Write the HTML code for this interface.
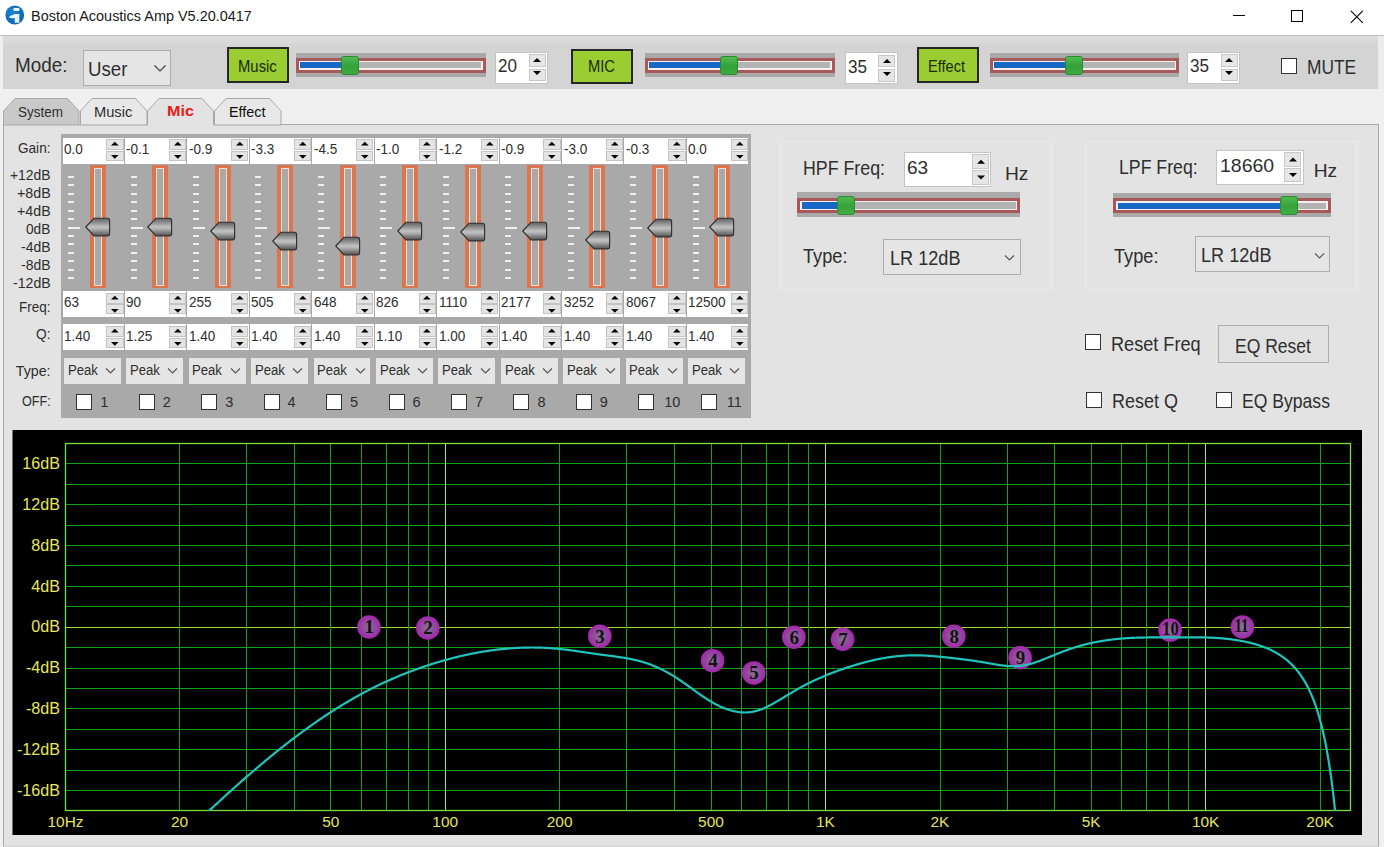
<!DOCTYPE html>
<html><head><meta charset="utf-8"><title>Boston Acoustics Amp</title>
<style>
html,body{margin:0;padding:0;width:1384px;height:847px;overflow:hidden;background:#f0f0f0;position:relative;font-family:"Liberation Sans",sans-serif}
body>div{position:absolute}
.t{position:absolute;white-space:nowrap;line-height:1}
</style></head><body>
<div style="left:0px;top:0px;width:1384px;height:35px;background:#fff"></div>
<svg style="position:absolute;left:4px;top:5px" width="21" height="21" viewBox="0 0 21 21">
<defs><radialGradient id="ig" cx="40%" cy="35%" r="70%"><stop offset="0" stop-color="#1f86d8"/><stop offset="1" stop-color="#0a5fae"/></radialGradient></defs>
<circle cx="10.75" cy="10" r="9.4" fill="url(#ig)"/>
<rect x="9.3" y="3.1" width="6.3" height="2.9" rx="1.4" fill="#e8f6ff"/>
<path d="M10.75 9 L15.3 9 L15.3 17.8 L10.75 17.8 L10.75 13.3 L5.6 12.9 L5.6 11.3 Z" fill="#e8f6ff"/>
</svg>
<div class="t" style="left:30.60px;top:7.80px;font-size:15.12px;color:#1a1a1a;transform:scaleX(0.9563);transform-origin:0 0;">Boston Acoustics Amp V5.20.0417</div>
<div style="left:1233px;top:15px;width:12px;height:1px;background:#000"></div>
<div style="left:1291px;top:10px;width:12px;height:12px;border:1px solid #000;box-sizing:border-box"></div>
<svg style="position:absolute;left:1349.5px;top:9.5px" width="15" height="15"><path d="M0.8 0.8 L12.8 12.8 M12.8 0.8 L0.8 12.8" stroke="#000" stroke-width="1.1"/></svg>
<div style="left:0px;top:35px;width:1384px;height:1px;background:#bdbdbd"></div>
<div style="left:3px;top:36px;width:1374.5px;height:53px;background:linear-gradient(#dddddd 0,#d9d9d9 6px,#d4d4d4 10px,#d4d4d4)"></div>
<div class="t" style="left:15.00px;top:55.02px;font-size:20.64px;color:#2e2e2e;transform:scaleX(0.9153);transform-origin:0 0;">Mode:</div>
<div style="left:82.5px;top:50px;width:88px;height:35.5px;background:#e5e5e5;border:1px solid #adadad;box-sizing:border-box"></div>
<div class="t" style="left:88.00px;top:59.01px;font-size:20.06px;color:#2e2e2e;transform:scaleX(0.9329);transform-origin:0 0;">User</div>
<svg style="position:absolute;left:153px;top:64px" width="14" height="9"><path d="M1.5 1.5 L7 7 L12.5 1.5" fill="none" stroke="#444" stroke-width="1.2"/></svg>
<div style="left:227px;top:47px;width:62px;height:36px;background:#9acd32;border:2px solid #262626;box-sizing:border-box"></div>
<div class="t" style="left:237.50px;top:57.51px;font-size:16.28px;color:#1d2a0a;transform:scaleX(0.9128);transform-origin:0 0;">Music</div>
<div style="left:296px;top:52.5px;width:189.5px;height:24.5px;background:#a9a9a9"></div>
<div style="left:296px;top:57.5px;width:189.5px;height:15px;background:#a65a5a"></div>
<div style="left:299px;top:60.5px;width:183.5px;height:9px;background:#fbeeee"></div>
<div style="left:300.3px;top:61.8px;width:180.9px;height:6.5px;background:#b4b4b4"></div>
<div style="left:300.3px;top:61.8px;width:43.3px;height:6.5px;background:#1668c4"></div>
<div style="left:340.6px;top:56px;width:18px;height:18.5px;background:linear-gradient(#50bc50,#33a03a 55%,#3daa44);border:1px solid #2a8a34;border-radius:3px;box-sizing:border-box"></div>
<div style="left:495px;top:51.5px;width:53px;height:32px;background:#fff;border:1px solid #c4c4c4;box-sizing:border-box"></div>
<div class="t" style="left:498.00px;top:58.38px;font-size:17.73px;color:#2e2e2e;transform:scaleX(0.9636);transform-origin:0 0;">20</div>
<div style="left:528.5px;top:54px;width:17px;height:12.5px;background:#e6e6e6;border:1px solid #c8c8c8;box-sizing:border-box"></div>
<div style="left:528.5px;top:68.5px;width:17px;height:12.5px;background:#e6e6e6;border:1px solid #c8c8c8;box-sizing:border-box"></div>
<svg style="position:absolute;left:533px;top:57px" width="8" height="22"><path d="M0 5 L4 1 L8 5 Z M0 14 L8 14 L4 18 Z" fill="#000"/></svg>
<div style="left:571px;top:48.75px;width:61.5px;height:35.5px;background:#9acd32;border:2px solid #262626;box-sizing:border-box"></div>
<div class="t" style="left:588.00px;top:58.67px;font-size:16.57px;color:#1d2a0a;transform:scaleX(0.8890);transform-origin:0 0;">MIC</div>
<div style="left:645px;top:52.5px;width:189.5px;height:24.5px;background:#a9a9a9"></div>
<div style="left:645px;top:57.5px;width:189.5px;height:15px;background:#a65a5a"></div>
<div style="left:648px;top:60.5px;width:183.5px;height:9px;background:#fbeeee"></div>
<div style="left:649.3px;top:61.8px;width:180.9px;height:6.5px;background:#b4b4b4"></div>
<div style="left:649.3px;top:61.8px;width:73.7px;height:6.5px;background:#1668c4"></div>
<div style="left:720px;top:56px;width:18px;height:18.5px;background:linear-gradient(#50bc50,#33a03a 55%,#3daa44);border:1px solid #2a8a34;border-radius:3px;box-sizing:border-box"></div>
<div style="left:845px;top:52px;width:52.5px;height:32px;background:#fff;border:1px solid #c4c4c4;box-sizing:border-box"></div>
<div class="t" style="left:847.50px;top:58.88px;font-size:17.73px;color:#2e2e2e;transform:scaleX(0.9636);transform-origin:0 0;">35</div>
<div style="left:878px;top:54.5px;width:17px;height:12.5px;background:#e6e6e6;border:1px solid #c8c8c8;box-sizing:border-box"></div>
<div style="left:878px;top:69px;width:17px;height:12.5px;background:#e6e6e6;border:1px solid #c8c8c8;box-sizing:border-box"></div>
<svg style="position:absolute;left:882.5px;top:57.5px" width="8" height="22"><path d="M0 5 L4 1 L8 5 Z M0 14 L8 14 L4 18 Z" fill="#000"/></svg>
<div style="left:917px;top:47px;width:61.5px;height:36px;background:#9acd32;border:2px solid #262626;box-sizing:border-box"></div>
<div class="t" style="left:928.30px;top:57.51px;font-size:16.28px;color:#1d2a0a;transform:scaleX(0.8952);transform-origin:0 0;">Effect</div>
<div style="left:989.5px;top:52.5px;width:189.5px;height:24.5px;background:#a9a9a9"></div>
<div style="left:989.5px;top:57.5px;width:189.5px;height:15px;background:#a65a5a"></div>
<div style="left:992.5px;top:60.5px;width:183.5px;height:9px;background:#fbeeee"></div>
<div style="left:993.8px;top:61.8px;width:180.9px;height:6.5px;background:#b4b4b4"></div>
<div style="left:993.8px;top:61.8px;width:74.2px;height:6.5px;background:#1668c4"></div>
<div style="left:1065px;top:56px;width:18px;height:18.5px;background:linear-gradient(#50bc50,#33a03a 55%,#3daa44);border:1px solid #2a8a34;border-radius:3px;box-sizing:border-box"></div>
<div style="left:1187px;top:51.5px;width:53px;height:32px;background:#fff;border:1px solid #c4c4c4;box-sizing:border-box"></div>
<div class="t" style="left:1190.00px;top:58.38px;font-size:17.73px;color:#2e2e2e;transform:scaleX(0.9636);transform-origin:0 0;">35</div>
<div style="left:1220.5px;top:54px;width:17px;height:12.5px;background:#e6e6e6;border:1px solid #c8c8c8;box-sizing:border-box"></div>
<div style="left:1220.5px;top:68.5px;width:17px;height:12.5px;background:#e6e6e6;border:1px solid #c8c8c8;box-sizing:border-box"></div>
<svg style="position:absolute;left:1225px;top:57px" width="8" height="22"><path d="M0 5 L4 1 L8 5 Z M0 14 L8 14 L4 18 Z" fill="#000"/></svg>
<div style="left:1280.5px;top:57.5px;width:16px;height:16px;background:#fff;border:1.5px solid #333;box-sizing:border-box"></div>
<div class="t" style="left:1306.80px;top:57.09px;font-size:20.20px;color:#2e2e2e;transform:scaleX(0.8596);transform-origin:0 0;">MUTE</div>
<div style="left:0px;top:36px;width:3px;height:53px;background:#f0f0f0"></div>
<div style="left:1377.5px;top:36px;width:6.5px;height:53px;background:#ececec"></div>
<div style="left:0px;top:89px;width:1384px;height:35px;background:#f0f0f0"></div>
<div style="left:3px;top:124px;width:1376px;height:723px;background:#e3e3e3;border:1px solid #a8a8a8;border-bottom-color:#d4d4d4;box-sizing:border-box"></div>
<svg style="position:absolute;left:3px;top:98px" width="77.5" height="28.5"><polygon points="0.5,27.0 0.5,13 12,0.5 64.5,0.5 76.0,13 76.0,27.0" fill="#c9c9c9" stroke="#a8a8a8" stroke-width="1"/></svg>
<svg style="position:absolute;left:79.5px;top:98px" width="68.5" height="28.5"><polygon points="0.5,27.0 0.5,13 12,0.5 55.5,0.5 67.0,13 67.0,27.0" fill="#e8e8e8" stroke="#a8a8a8" stroke-width="1"/></svg>
<svg style="position:absolute;left:214px;top:98px" width="68.5" height="28.5"><polygon points="0.5,27.0 0.5,13 12,0.5 55.5,0.5 67.0,13 67.0,27.0" fill="#e8e8e8" stroke="#a8a8a8" stroke-width="1"/></svg>
<svg style="position:absolute;left:146.5px;top:98px" width="68" height="28.5"><polygon points="0.5,27.0 0.5,13 12,0.5 55.0,0.5 66.5,13 66.5,27.0" fill="#e3e3e3" stroke="#a8a8a8" stroke-width="1"/></svg>
<div style="left:147.5px;top:124px;width:65px;height:1.5px;background:#e3e3e3"></div>
<div class="t" style="left:18.00px;top:103.60px;font-size:15.12px;color:#2e2e2e;transform:scaleX(0.8929);transform-origin:0 0;">System</div>
<div class="t" style="left:93.80px;top:103.60px;font-size:15.12px;color:#2e2e2e;transform:scaleX(0.9704);transform-origin:0 0;">Music</div>
<div class="t" style="left:167.00px;top:103.82px;font-size:14.97px;color:#e81a1a;font-weight:bold;transform:scaleX(1.0819);transform-origin:0 0;">Mic</div>
<div class="t" style="left:229.40px;top:103.60px;font-size:15.12px;color:#111;transform:scaleX(0.9536);transform-origin:0 0;">Effect</div>
<div style="left:61px;top:134px;width:689.7px;height:284px;background:#a9a9a9"></div>
<div style="left:62.5px;top:137.75px;width:61.4px;height:26px;background:#fff"></div>
<div class="t" style="left:64.00px;top:141.89px;font-size:14.24px;color:#2e2e2e;transform:scaleX(0.9500);transform-origin:0 0;">0.0</div>
<div style="left:106.4px;top:139.25px;width:17.2px;height:10.75px;background:#e4e4e4;border:1px solid #c4c4c4;box-sizing:border-box"></div>
<div style="left:106.4px;top:150.95px;width:17.2px;height:10px;background:#e4e4e4;border:1px solid #c4c4c4;box-sizing:border-box"></div>
<svg style="position:absolute;left:111.2px;top:139.25px" width="8" height="22"><path d="M0 6.6 L3.8 2.8 L7.6 6.6 Z M0 15.9 L7.6 15.9 L3.8 19.7 Z" fill="#000"/></svg>
<div style="left:62.5px;top:291.25px;width:61.4px;height:25.75px;background:#fff"></div>
<div class="t" style="left:64.00px;top:295.39px;font-size:14.24px;color:#2e2e2e;transform:scaleX(0.9500);transform-origin:0 0;">63</div>
<div style="left:106.4px;top:292.75px;width:17.2px;height:10.75px;background:#e4e4e4;border:1px solid #c4c4c4;box-sizing:border-box"></div>
<div style="left:106.4px;top:304.45px;width:17.2px;height:10px;background:#e4e4e4;border:1px solid #c4c4c4;box-sizing:border-box"></div>
<svg style="position:absolute;left:111.2px;top:292.75px" width="8" height="22"><path d="M0 6.6 L3.8 2.8 L7.6 6.6 Z M0 15.9 L7.6 15.9 L3.8 19.7 Z" fill="#000"/></svg>
<div style="left:62.5px;top:324.4px;width:61.4px;height:25.6px;background:#fff"></div>
<div class="t" style="left:64.00px;top:328.54px;font-size:14.24px;color:#2e2e2e;transform:scaleX(0.9500);transform-origin:0 0;">1.40</div>
<div style="left:106.4px;top:325.9px;width:17.2px;height:10.75px;background:#e4e4e4;border:1px solid #c4c4c4;box-sizing:border-box"></div>
<div style="left:106.4px;top:337.6px;width:17.2px;height:10px;background:#e4e4e4;border:1px solid #c4c4c4;box-sizing:border-box"></div>
<svg style="position:absolute;left:111.2px;top:325.9px" width="8" height="22"><path d="M0 6.6 L3.8 2.8 L7.6 6.6 Z M0 15.9 L7.6 15.9 L3.8 19.7 Z" fill="#000"/></svg>
<div style="left:68.1px;top:176px;width:6px;height:2px;background:#efefef"></div>
<div style="left:68.1px;top:184.43px;width:6px;height:2px;background:#efefef"></div>
<div style="left:68.1px;top:192.86px;width:6px;height:2px;background:#efefef"></div>
<div style="left:68.1px;top:201.29px;width:6px;height:2px;background:#efefef"></div>
<div style="left:68.1px;top:209.72px;width:6px;height:2px;background:#efefef"></div>
<div style="left:68.1px;top:218.15px;width:6px;height:2px;background:#efefef"></div>
<div style="left:68.1px;top:226.58px;width:12px;height:2px;background:#efefef"></div>
<div style="left:68.1px;top:235.01px;width:6px;height:2px;background:#efefef"></div>
<div style="left:68.1px;top:243.44px;width:6px;height:2px;background:#efefef"></div>
<div style="left:68.1px;top:251.87px;width:6px;height:2px;background:#efefef"></div>
<div style="left:68.1px;top:260.3px;width:6px;height:2px;background:#efefef"></div>
<div style="left:68.1px;top:268.73px;width:6px;height:2px;background:#efefef"></div>
<div style="left:68.1px;top:277.16px;width:6px;height:2px;background:#efefef"></div>
<div style="left:89.9px;top:165px;width:16px;height:123px;background:#dc7650"></div>
<div style="left:93.9px;top:167.5px;width:8px;height:118.8px;background:#a9a9a9;border:1px solid #f6dccb;box-sizing:border-box"></div>
<svg style="position:absolute;left:85.00px;top:217.00px" width="26" height="20"><defs><linearGradient id="tg0" x1="0" y1="0" x2="0" y2="1"><stop offset="0" stop-color="#5e5e5e"/><stop offset="0.5" stop-color="#c2c2c2"/><stop offset="0.62" stop-color="#b0b0b0"/><stop offset="1" stop-color="#505050"/></linearGradient></defs><path d="M0.8 10 L9 1.2 L22.5 1.2 Q24.6 1.2 24.6 3.3 L24.6 16.7 Q24.6 18.8 22.5 18.8 L9 18.8 Z" fill="url(#tg0)" stroke="#303030" stroke-width="1.15"/></svg>
<div style="left:63.75px;top:358px;width:56.9px;height:25.75px;background:#e5e5e5"></div>
<div class="t" style="left:67.50px;top:363.44px;font-size:14.53px;color:#2e2e2e;transform:scaleX(0.9049);transform-origin:0 0;">Peak</div>
<svg style="position:absolute;left:105px;top:367px" width="12" height="8"><path d="M1 1.5 L5.5 6 L10 1.5" fill="none" stroke="#555" stroke-width="1.1"/></svg>
<div style="left:76.3px;top:393.75px;width:16px;height:16px;background:#fff;border:1.5px solid #333;box-sizing:border-box"></div>
<div class="t" style="left:100.30px;top:394.69px;font-size:14.53px;color:#2e2e2e;">1</div>
<div style="left:124.94px;top:137.75px;width:61.4px;height:26px;background:#fff"></div>
<div class="t" style="left:126.44px;top:141.89px;font-size:14.24px;color:#2e2e2e;transform:scaleX(0.9500);transform-origin:0 0;">-0.1</div>
<div style="left:168.84px;top:139.25px;width:17.2px;height:10.75px;background:#e4e4e4;border:1px solid #c4c4c4;box-sizing:border-box"></div>
<div style="left:168.84px;top:150.95px;width:17.2px;height:10px;background:#e4e4e4;border:1px solid #c4c4c4;box-sizing:border-box"></div>
<svg style="position:absolute;left:173.64px;top:139.25px" width="8" height="22"><path d="M0 6.6 L3.8 2.8 L7.6 6.6 Z M0 15.9 L7.6 15.9 L3.8 19.7 Z" fill="#000"/></svg>
<div style="left:124.94px;top:291.25px;width:61.4px;height:25.75px;background:#fff"></div>
<div class="t" style="left:126.44px;top:295.39px;font-size:14.24px;color:#2e2e2e;transform:scaleX(0.9500);transform-origin:0 0;">90</div>
<div style="left:168.84px;top:292.75px;width:17.2px;height:10.75px;background:#e4e4e4;border:1px solid #c4c4c4;box-sizing:border-box"></div>
<div style="left:168.84px;top:304.45px;width:17.2px;height:10px;background:#e4e4e4;border:1px solid #c4c4c4;box-sizing:border-box"></div>
<svg style="position:absolute;left:173.64px;top:292.75px" width="8" height="22"><path d="M0 6.6 L3.8 2.8 L7.6 6.6 Z M0 15.9 L7.6 15.9 L3.8 19.7 Z" fill="#000"/></svg>
<div style="left:124.94px;top:324.4px;width:61.4px;height:25.6px;background:#fff"></div>
<div class="t" style="left:126.44px;top:328.54px;font-size:14.24px;color:#2e2e2e;transform:scaleX(0.9500);transform-origin:0 0;">1.25</div>
<div style="left:168.84px;top:325.9px;width:17.2px;height:10.75px;background:#e4e4e4;border:1px solid #c4c4c4;box-sizing:border-box"></div>
<div style="left:168.84px;top:337.6px;width:17.2px;height:10px;background:#e4e4e4;border:1px solid #c4c4c4;box-sizing:border-box"></div>
<svg style="position:absolute;left:173.64px;top:325.9px" width="8" height="22"><path d="M0 6.6 L3.8 2.8 L7.6 6.6 Z M0 15.9 L7.6 15.9 L3.8 19.7 Z" fill="#000"/></svg>
<div style="left:130.54px;top:176px;width:6px;height:2px;background:#efefef"></div>
<div style="left:130.54px;top:184.43px;width:6px;height:2px;background:#efefef"></div>
<div style="left:130.54px;top:192.86px;width:6px;height:2px;background:#efefef"></div>
<div style="left:130.54px;top:201.29px;width:6px;height:2px;background:#efefef"></div>
<div style="left:130.54px;top:209.72px;width:6px;height:2px;background:#efefef"></div>
<div style="left:130.54px;top:218.15px;width:6px;height:2px;background:#efefef"></div>
<div style="left:130.54px;top:226.58px;width:12px;height:2px;background:#efefef"></div>
<div style="left:130.54px;top:235.01px;width:6px;height:2px;background:#efefef"></div>
<div style="left:130.54px;top:243.44px;width:6px;height:2px;background:#efefef"></div>
<div style="left:130.54px;top:251.87px;width:6px;height:2px;background:#efefef"></div>
<div style="left:130.54px;top:260.3px;width:6px;height:2px;background:#efefef"></div>
<div style="left:130.54px;top:268.73px;width:6px;height:2px;background:#efefef"></div>
<div style="left:130.54px;top:277.16px;width:6px;height:2px;background:#efefef"></div>
<div style="left:152.34px;top:165px;width:16px;height:123px;background:#dc7650"></div>
<div style="left:156.34px;top:167.5px;width:8px;height:118.8px;background:#a9a9a9;border:1px solid #f6dccb;box-sizing:border-box"></div>
<svg style="position:absolute;left:147.44px;top:217.42px" width="26" height="20"><defs><linearGradient id="tg1" x1="0" y1="0" x2="0" y2="1"><stop offset="0" stop-color="#5e5e5e"/><stop offset="0.5" stop-color="#c2c2c2"/><stop offset="0.62" stop-color="#b0b0b0"/><stop offset="1" stop-color="#505050"/></linearGradient></defs><path d="M0.8 10 L9 1.2 L22.5 1.2 Q24.6 1.2 24.6 3.3 L24.6 16.7 Q24.6 18.8 22.5 18.8 L9 18.8 Z" fill="url(#tg1)" stroke="#303030" stroke-width="1.15"/></svg>
<div style="left:126.19px;top:358px;width:56.9px;height:25.75px;background:#e5e5e5"></div>
<div class="t" style="left:129.94px;top:363.44px;font-size:14.53px;color:#2e2e2e;transform:scaleX(0.9049);transform-origin:0 0;">Peak</div>
<svg style="position:absolute;left:167.44px;top:367px" width="12" height="8"><path d="M1 1.5 L5.5 6 L10 1.5" fill="none" stroke="#555" stroke-width="1.1"/></svg>
<div style="left:138.74px;top:393.75px;width:16px;height:16px;background:#fff;border:1.5px solid #333;box-sizing:border-box"></div>
<div class="t" style="left:162.74px;top:394.69px;font-size:14.53px;color:#2e2e2e;">2</div>
<div style="left:187.38px;top:137.75px;width:61.4px;height:26px;background:#fff"></div>
<div class="t" style="left:188.88px;top:141.89px;font-size:14.24px;color:#2e2e2e;transform:scaleX(0.9500);transform-origin:0 0;">-0.9</div>
<div style="left:231.28px;top:139.25px;width:17.2px;height:10.75px;background:#e4e4e4;border:1px solid #c4c4c4;box-sizing:border-box"></div>
<div style="left:231.28px;top:150.95px;width:17.2px;height:10px;background:#e4e4e4;border:1px solid #c4c4c4;box-sizing:border-box"></div>
<svg style="position:absolute;left:236.08px;top:139.25px" width="8" height="22"><path d="M0 6.6 L3.8 2.8 L7.6 6.6 Z M0 15.9 L7.6 15.9 L3.8 19.7 Z" fill="#000"/></svg>
<div style="left:187.38px;top:291.25px;width:61.4px;height:25.75px;background:#fff"></div>
<div class="t" style="left:188.88px;top:295.39px;font-size:14.24px;color:#2e2e2e;transform:scaleX(0.9500);transform-origin:0 0;">255</div>
<div style="left:231.28px;top:292.75px;width:17.2px;height:10.75px;background:#e4e4e4;border:1px solid #c4c4c4;box-sizing:border-box"></div>
<div style="left:231.28px;top:304.45px;width:17.2px;height:10px;background:#e4e4e4;border:1px solid #c4c4c4;box-sizing:border-box"></div>
<svg style="position:absolute;left:236.08px;top:292.75px" width="8" height="22"><path d="M0 6.6 L3.8 2.8 L7.6 6.6 Z M0 15.9 L7.6 15.9 L3.8 19.7 Z" fill="#000"/></svg>
<div style="left:187.38px;top:324.4px;width:61.4px;height:25.6px;background:#fff"></div>
<div class="t" style="left:188.88px;top:328.54px;font-size:14.24px;color:#2e2e2e;transform:scaleX(0.9500);transform-origin:0 0;">1.40</div>
<div style="left:231.28px;top:325.9px;width:17.2px;height:10.75px;background:#e4e4e4;border:1px solid #c4c4c4;box-sizing:border-box"></div>
<div style="left:231.28px;top:337.6px;width:17.2px;height:10px;background:#e4e4e4;border:1px solid #c4c4c4;box-sizing:border-box"></div>
<svg style="position:absolute;left:236.08px;top:325.9px" width="8" height="22"><path d="M0 6.6 L3.8 2.8 L7.6 6.6 Z M0 15.9 L7.6 15.9 L3.8 19.7 Z" fill="#000"/></svg>
<div style="left:192.98px;top:176px;width:6px;height:2px;background:#efefef"></div>
<div style="left:192.98px;top:184.43px;width:6px;height:2px;background:#efefef"></div>
<div style="left:192.98px;top:192.86px;width:6px;height:2px;background:#efefef"></div>
<div style="left:192.98px;top:201.29px;width:6px;height:2px;background:#efefef"></div>
<div style="left:192.98px;top:209.72px;width:6px;height:2px;background:#efefef"></div>
<div style="left:192.98px;top:218.15px;width:6px;height:2px;background:#efefef"></div>
<div style="left:192.98px;top:226.58px;width:12px;height:2px;background:#efefef"></div>
<div style="left:192.98px;top:235.01px;width:6px;height:2px;background:#efefef"></div>
<div style="left:192.98px;top:243.44px;width:6px;height:2px;background:#efefef"></div>
<div style="left:192.98px;top:251.87px;width:6px;height:2px;background:#efefef"></div>
<div style="left:192.98px;top:260.3px;width:6px;height:2px;background:#efefef"></div>
<div style="left:192.98px;top:268.73px;width:6px;height:2px;background:#efefef"></div>
<div style="left:192.98px;top:277.16px;width:6px;height:2px;background:#efefef"></div>
<div style="left:214.78px;top:165px;width:16px;height:123px;background:#dc7650"></div>
<div style="left:218.78px;top:167.5px;width:8px;height:118.8px;background:#a9a9a9;border:1px solid #f6dccb;box-sizing:border-box"></div>
<svg style="position:absolute;left:209.88px;top:220.79px" width="26" height="20"><defs><linearGradient id="tg2" x1="0" y1="0" x2="0" y2="1"><stop offset="0" stop-color="#5e5e5e"/><stop offset="0.5" stop-color="#c2c2c2"/><stop offset="0.62" stop-color="#b0b0b0"/><stop offset="1" stop-color="#505050"/></linearGradient></defs><path d="M0.8 10 L9 1.2 L22.5 1.2 Q24.6 1.2 24.6 3.3 L24.6 16.7 Q24.6 18.8 22.5 18.8 L9 18.8 Z" fill="url(#tg2)" stroke="#303030" stroke-width="1.15"/></svg>
<div style="left:188.63px;top:358px;width:56.9px;height:25.75px;background:#e5e5e5"></div>
<div class="t" style="left:192.38px;top:363.44px;font-size:14.53px;color:#2e2e2e;transform:scaleX(0.9049);transform-origin:0 0;">Peak</div>
<svg style="position:absolute;left:229.88px;top:367px" width="12" height="8"><path d="M1 1.5 L5.5 6 L10 1.5" fill="none" stroke="#555" stroke-width="1.1"/></svg>
<div style="left:201.18px;top:393.75px;width:16px;height:16px;background:#fff;border:1.5px solid #333;box-sizing:border-box"></div>
<div class="t" style="left:225.18px;top:394.69px;font-size:14.53px;color:#2e2e2e;">3</div>
<div style="left:249.82px;top:137.75px;width:61.4px;height:26px;background:#fff"></div>
<div class="t" style="left:251.32px;top:141.89px;font-size:14.24px;color:#2e2e2e;transform:scaleX(0.9500);transform-origin:0 0;">-3.3</div>
<div style="left:293.72px;top:139.25px;width:17.2px;height:10.75px;background:#e4e4e4;border:1px solid #c4c4c4;box-sizing:border-box"></div>
<div style="left:293.72px;top:150.95px;width:17.2px;height:10px;background:#e4e4e4;border:1px solid #c4c4c4;box-sizing:border-box"></div>
<svg style="position:absolute;left:298.52px;top:139.25px" width="8" height="22"><path d="M0 6.6 L3.8 2.8 L7.6 6.6 Z M0 15.9 L7.6 15.9 L3.8 19.7 Z" fill="#000"/></svg>
<div style="left:249.82px;top:291.25px;width:61.4px;height:25.75px;background:#fff"></div>
<div class="t" style="left:251.32px;top:295.39px;font-size:14.24px;color:#2e2e2e;transform:scaleX(0.9500);transform-origin:0 0;">505</div>
<div style="left:293.72px;top:292.75px;width:17.2px;height:10.75px;background:#e4e4e4;border:1px solid #c4c4c4;box-sizing:border-box"></div>
<div style="left:293.72px;top:304.45px;width:17.2px;height:10px;background:#e4e4e4;border:1px solid #c4c4c4;box-sizing:border-box"></div>
<svg style="position:absolute;left:298.52px;top:292.75px" width="8" height="22"><path d="M0 6.6 L3.8 2.8 L7.6 6.6 Z M0 15.9 L7.6 15.9 L3.8 19.7 Z" fill="#000"/></svg>
<div style="left:249.82px;top:324.4px;width:61.4px;height:25.6px;background:#fff"></div>
<div class="t" style="left:251.32px;top:328.54px;font-size:14.24px;color:#2e2e2e;transform:scaleX(0.9500);transform-origin:0 0;">1.40</div>
<div style="left:293.72px;top:325.9px;width:17.2px;height:10.75px;background:#e4e4e4;border:1px solid #c4c4c4;box-sizing:border-box"></div>
<div style="left:293.72px;top:337.6px;width:17.2px;height:10px;background:#e4e4e4;border:1px solid #c4c4c4;box-sizing:border-box"></div>
<svg style="position:absolute;left:298.52px;top:325.9px" width="8" height="22"><path d="M0 6.6 L3.8 2.8 L7.6 6.6 Z M0 15.9 L7.6 15.9 L3.8 19.7 Z" fill="#000"/></svg>
<div style="left:255.42px;top:176px;width:6px;height:2px;background:#efefef"></div>
<div style="left:255.42px;top:184.43px;width:6px;height:2px;background:#efefef"></div>
<div style="left:255.42px;top:192.86px;width:6px;height:2px;background:#efefef"></div>
<div style="left:255.42px;top:201.29px;width:6px;height:2px;background:#efefef"></div>
<div style="left:255.42px;top:209.72px;width:6px;height:2px;background:#efefef"></div>
<div style="left:255.42px;top:218.15px;width:6px;height:2px;background:#efefef"></div>
<div style="left:255.42px;top:226.58px;width:12px;height:2px;background:#efefef"></div>
<div style="left:255.42px;top:235.01px;width:6px;height:2px;background:#efefef"></div>
<div style="left:255.42px;top:243.44px;width:6px;height:2px;background:#efefef"></div>
<div style="left:255.42px;top:251.87px;width:6px;height:2px;background:#efefef"></div>
<div style="left:255.42px;top:260.3px;width:6px;height:2px;background:#efefef"></div>
<div style="left:255.42px;top:268.73px;width:6px;height:2px;background:#efefef"></div>
<div style="left:255.42px;top:277.16px;width:6px;height:2px;background:#efefef"></div>
<div style="left:277.22px;top:165px;width:16px;height:123px;background:#dc7650"></div>
<div style="left:281.22px;top:167.5px;width:8px;height:118.8px;background:#a9a9a9;border:1px solid #f6dccb;box-sizing:border-box"></div>
<svg style="position:absolute;left:272.32px;top:230.89px" width="26" height="20"><defs><linearGradient id="tg3" x1="0" y1="0" x2="0" y2="1"><stop offset="0" stop-color="#5e5e5e"/><stop offset="0.5" stop-color="#c2c2c2"/><stop offset="0.62" stop-color="#b0b0b0"/><stop offset="1" stop-color="#505050"/></linearGradient></defs><path d="M0.8 10 L9 1.2 L22.5 1.2 Q24.6 1.2 24.6 3.3 L24.6 16.7 Q24.6 18.8 22.5 18.8 L9 18.8 Z" fill="url(#tg3)" stroke="#303030" stroke-width="1.15"/></svg>
<div style="left:251.07px;top:358px;width:56.9px;height:25.75px;background:#e5e5e5"></div>
<div class="t" style="left:254.82px;top:363.44px;font-size:14.53px;color:#2e2e2e;transform:scaleX(0.9049);transform-origin:0 0;">Peak</div>
<svg style="position:absolute;left:292.32px;top:367px" width="12" height="8"><path d="M1 1.5 L5.5 6 L10 1.5" fill="none" stroke="#555" stroke-width="1.1"/></svg>
<div style="left:263.62px;top:393.75px;width:16px;height:16px;background:#fff;border:1.5px solid #333;box-sizing:border-box"></div>
<div class="t" style="left:287.62px;top:394.69px;font-size:14.53px;color:#2e2e2e;">4</div>
<div style="left:312.26px;top:137.75px;width:61.4px;height:26px;background:#fff"></div>
<div class="t" style="left:313.76px;top:141.89px;font-size:14.24px;color:#2e2e2e;transform:scaleX(0.9500);transform-origin:0 0;">-4.5</div>
<div style="left:356.16px;top:139.25px;width:17.2px;height:10.75px;background:#e4e4e4;border:1px solid #c4c4c4;box-sizing:border-box"></div>
<div style="left:356.16px;top:150.95px;width:17.2px;height:10px;background:#e4e4e4;border:1px solid #c4c4c4;box-sizing:border-box"></div>
<svg style="position:absolute;left:360.96px;top:139.25px" width="8" height="22"><path d="M0 6.6 L3.8 2.8 L7.6 6.6 Z M0 15.9 L7.6 15.9 L3.8 19.7 Z" fill="#000"/></svg>
<div style="left:312.26px;top:291.25px;width:61.4px;height:25.75px;background:#fff"></div>
<div class="t" style="left:313.76px;top:295.39px;font-size:14.24px;color:#2e2e2e;transform:scaleX(0.9500);transform-origin:0 0;">648</div>
<div style="left:356.16px;top:292.75px;width:17.2px;height:10.75px;background:#e4e4e4;border:1px solid #c4c4c4;box-sizing:border-box"></div>
<div style="left:356.16px;top:304.45px;width:17.2px;height:10px;background:#e4e4e4;border:1px solid #c4c4c4;box-sizing:border-box"></div>
<svg style="position:absolute;left:360.96px;top:292.75px" width="8" height="22"><path d="M0 6.6 L3.8 2.8 L7.6 6.6 Z M0 15.9 L7.6 15.9 L3.8 19.7 Z" fill="#000"/></svg>
<div style="left:312.26px;top:324.4px;width:61.4px;height:25.6px;background:#fff"></div>
<div class="t" style="left:313.76px;top:328.54px;font-size:14.24px;color:#2e2e2e;transform:scaleX(0.9500);transform-origin:0 0;">1.40</div>
<div style="left:356.16px;top:325.9px;width:17.2px;height:10.75px;background:#e4e4e4;border:1px solid #c4c4c4;box-sizing:border-box"></div>
<div style="left:356.16px;top:337.6px;width:17.2px;height:10px;background:#e4e4e4;border:1px solid #c4c4c4;box-sizing:border-box"></div>
<svg style="position:absolute;left:360.96px;top:325.9px" width="8" height="22"><path d="M0 6.6 L3.8 2.8 L7.6 6.6 Z M0 15.9 L7.6 15.9 L3.8 19.7 Z" fill="#000"/></svg>
<div style="left:317.86px;top:176px;width:6px;height:2px;background:#efefef"></div>
<div style="left:317.86px;top:184.43px;width:6px;height:2px;background:#efefef"></div>
<div style="left:317.86px;top:192.86px;width:6px;height:2px;background:#efefef"></div>
<div style="left:317.86px;top:201.29px;width:6px;height:2px;background:#efefef"></div>
<div style="left:317.86px;top:209.72px;width:6px;height:2px;background:#efefef"></div>
<div style="left:317.86px;top:218.15px;width:6px;height:2px;background:#efefef"></div>
<div style="left:317.86px;top:226.58px;width:12px;height:2px;background:#efefef"></div>
<div style="left:317.86px;top:235.01px;width:6px;height:2px;background:#efefef"></div>
<div style="left:317.86px;top:243.44px;width:6px;height:2px;background:#efefef"></div>
<div style="left:317.86px;top:251.87px;width:6px;height:2px;background:#efefef"></div>
<div style="left:317.86px;top:260.3px;width:6px;height:2px;background:#efefef"></div>
<div style="left:317.86px;top:268.73px;width:6px;height:2px;background:#efefef"></div>
<div style="left:317.86px;top:277.16px;width:6px;height:2px;background:#efefef"></div>
<div style="left:339.66px;top:165px;width:16px;height:123px;background:#dc7650"></div>
<div style="left:343.66px;top:167.5px;width:8px;height:118.8px;background:#a9a9a9;border:1px solid #f6dccb;box-sizing:border-box"></div>
<svg style="position:absolute;left:334.76px;top:235.94px" width="26" height="20"><defs><linearGradient id="tg4" x1="0" y1="0" x2="0" y2="1"><stop offset="0" stop-color="#5e5e5e"/><stop offset="0.5" stop-color="#c2c2c2"/><stop offset="0.62" stop-color="#b0b0b0"/><stop offset="1" stop-color="#505050"/></linearGradient></defs><path d="M0.8 10 L9 1.2 L22.5 1.2 Q24.6 1.2 24.6 3.3 L24.6 16.7 Q24.6 18.8 22.5 18.8 L9 18.8 Z" fill="url(#tg4)" stroke="#303030" stroke-width="1.15"/></svg>
<div style="left:313.51px;top:358px;width:56.9px;height:25.75px;background:#e5e5e5"></div>
<div class="t" style="left:317.26px;top:363.44px;font-size:14.53px;color:#2e2e2e;transform:scaleX(0.9049);transform-origin:0 0;">Peak</div>
<svg style="position:absolute;left:354.76px;top:367px" width="12" height="8"><path d="M1 1.5 L5.5 6 L10 1.5" fill="none" stroke="#555" stroke-width="1.1"/></svg>
<div style="left:326.06px;top:393.75px;width:16px;height:16px;background:#fff;border:1.5px solid #333;box-sizing:border-box"></div>
<div class="t" style="left:350.06px;top:394.69px;font-size:14.53px;color:#2e2e2e;">5</div>
<div style="left:374.7px;top:137.75px;width:61.4px;height:26px;background:#fff"></div>
<div class="t" style="left:376.20px;top:141.89px;font-size:14.24px;color:#2e2e2e;transform:scaleX(0.9500);transform-origin:0 0;">-1.0</div>
<div style="left:418.6px;top:139.25px;width:17.2px;height:10.75px;background:#e4e4e4;border:1px solid #c4c4c4;box-sizing:border-box"></div>
<div style="left:418.6px;top:150.95px;width:17.2px;height:10px;background:#e4e4e4;border:1px solid #c4c4c4;box-sizing:border-box"></div>
<svg style="position:absolute;left:423.4px;top:139.25px" width="8" height="22"><path d="M0 6.6 L3.8 2.8 L7.6 6.6 Z M0 15.9 L7.6 15.9 L3.8 19.7 Z" fill="#000"/></svg>
<div style="left:374.7px;top:291.25px;width:61.4px;height:25.75px;background:#fff"></div>
<div class="t" style="left:376.20px;top:295.39px;font-size:14.24px;color:#2e2e2e;transform:scaleX(0.9500);transform-origin:0 0;">826</div>
<div style="left:418.6px;top:292.75px;width:17.2px;height:10.75px;background:#e4e4e4;border:1px solid #c4c4c4;box-sizing:border-box"></div>
<div style="left:418.6px;top:304.45px;width:17.2px;height:10px;background:#e4e4e4;border:1px solid #c4c4c4;box-sizing:border-box"></div>
<svg style="position:absolute;left:423.4px;top:292.75px" width="8" height="22"><path d="M0 6.6 L3.8 2.8 L7.6 6.6 Z M0 15.9 L7.6 15.9 L3.8 19.7 Z" fill="#000"/></svg>
<div style="left:374.7px;top:324.4px;width:61.4px;height:25.6px;background:#fff"></div>
<div class="t" style="left:376.20px;top:328.54px;font-size:14.24px;color:#2e2e2e;transform:scaleX(0.9500);transform-origin:0 0;">1.10</div>
<div style="left:418.6px;top:325.9px;width:17.2px;height:10.75px;background:#e4e4e4;border:1px solid #c4c4c4;box-sizing:border-box"></div>
<div style="left:418.6px;top:337.6px;width:17.2px;height:10px;background:#e4e4e4;border:1px solid #c4c4c4;box-sizing:border-box"></div>
<svg style="position:absolute;left:423.4px;top:325.9px" width="8" height="22"><path d="M0 6.6 L3.8 2.8 L7.6 6.6 Z M0 15.9 L7.6 15.9 L3.8 19.7 Z" fill="#000"/></svg>
<div style="left:380.3px;top:176px;width:6px;height:2px;background:#efefef"></div>
<div style="left:380.3px;top:184.43px;width:6px;height:2px;background:#efefef"></div>
<div style="left:380.3px;top:192.86px;width:6px;height:2px;background:#efefef"></div>
<div style="left:380.3px;top:201.29px;width:6px;height:2px;background:#efefef"></div>
<div style="left:380.3px;top:209.72px;width:6px;height:2px;background:#efefef"></div>
<div style="left:380.3px;top:218.15px;width:6px;height:2px;background:#efefef"></div>
<div style="left:380.3px;top:226.58px;width:12px;height:2px;background:#efefef"></div>
<div style="left:380.3px;top:235.01px;width:6px;height:2px;background:#efefef"></div>
<div style="left:380.3px;top:243.44px;width:6px;height:2px;background:#efefef"></div>
<div style="left:380.3px;top:251.87px;width:6px;height:2px;background:#efefef"></div>
<div style="left:380.3px;top:260.3px;width:6px;height:2px;background:#efefef"></div>
<div style="left:380.3px;top:268.73px;width:6px;height:2px;background:#efefef"></div>
<div style="left:380.3px;top:277.16px;width:6px;height:2px;background:#efefef"></div>
<div style="left:402.1px;top:165px;width:16px;height:123px;background:#dc7650"></div>
<div style="left:406.1px;top:167.5px;width:8px;height:118.8px;background:#a9a9a9;border:1px solid #f6dccb;box-sizing:border-box"></div>
<svg style="position:absolute;left:397.20px;top:221.21px" width="26" height="20"><defs><linearGradient id="tg5" x1="0" y1="0" x2="0" y2="1"><stop offset="0" stop-color="#5e5e5e"/><stop offset="0.5" stop-color="#c2c2c2"/><stop offset="0.62" stop-color="#b0b0b0"/><stop offset="1" stop-color="#505050"/></linearGradient></defs><path d="M0.8 10 L9 1.2 L22.5 1.2 Q24.6 1.2 24.6 3.3 L24.6 16.7 Q24.6 18.8 22.5 18.8 L9 18.8 Z" fill="url(#tg5)" stroke="#303030" stroke-width="1.15"/></svg>
<div style="left:375.95px;top:358px;width:56.9px;height:25.75px;background:#e5e5e5"></div>
<div class="t" style="left:379.70px;top:363.44px;font-size:14.53px;color:#2e2e2e;transform:scaleX(0.9049);transform-origin:0 0;">Peak</div>
<svg style="position:absolute;left:417.2px;top:367px" width="12" height="8"><path d="M1 1.5 L5.5 6 L10 1.5" fill="none" stroke="#555" stroke-width="1.1"/></svg>
<div style="left:388.5px;top:393.75px;width:16px;height:16px;background:#fff;border:1.5px solid #333;box-sizing:border-box"></div>
<div class="t" style="left:412.50px;top:394.69px;font-size:14.53px;color:#2e2e2e;">6</div>
<div style="left:437.14px;top:137.75px;width:61.4px;height:26px;background:#fff"></div>
<div class="t" style="left:438.64px;top:141.89px;font-size:14.24px;color:#2e2e2e;transform:scaleX(0.9500);transform-origin:0 0;">-1.2</div>
<div style="left:481.04px;top:139.25px;width:17.2px;height:10.75px;background:#e4e4e4;border:1px solid #c4c4c4;box-sizing:border-box"></div>
<div style="left:481.04px;top:150.95px;width:17.2px;height:10px;background:#e4e4e4;border:1px solid #c4c4c4;box-sizing:border-box"></div>
<svg style="position:absolute;left:485.84px;top:139.25px" width="8" height="22"><path d="M0 6.6 L3.8 2.8 L7.6 6.6 Z M0 15.9 L7.6 15.9 L3.8 19.7 Z" fill="#000"/></svg>
<div style="left:437.14px;top:291.25px;width:61.4px;height:25.75px;background:#fff"></div>
<div class="t" style="left:438.64px;top:295.39px;font-size:14.24px;color:#2e2e2e;transform:scaleX(0.9500);transform-origin:0 0;">1110</div>
<div style="left:481.04px;top:292.75px;width:17.2px;height:10.75px;background:#e4e4e4;border:1px solid #c4c4c4;box-sizing:border-box"></div>
<div style="left:481.04px;top:304.45px;width:17.2px;height:10px;background:#e4e4e4;border:1px solid #c4c4c4;box-sizing:border-box"></div>
<svg style="position:absolute;left:485.84px;top:292.75px" width="8" height="22"><path d="M0 6.6 L3.8 2.8 L7.6 6.6 Z M0 15.9 L7.6 15.9 L3.8 19.7 Z" fill="#000"/></svg>
<div style="left:437.14px;top:324.4px;width:61.4px;height:25.6px;background:#fff"></div>
<div class="t" style="left:438.64px;top:328.54px;font-size:14.24px;color:#2e2e2e;transform:scaleX(0.9500);transform-origin:0 0;">1.00</div>
<div style="left:481.04px;top:325.9px;width:17.2px;height:10.75px;background:#e4e4e4;border:1px solid #c4c4c4;box-sizing:border-box"></div>
<div style="left:481.04px;top:337.6px;width:17.2px;height:10px;background:#e4e4e4;border:1px solid #c4c4c4;box-sizing:border-box"></div>
<svg style="position:absolute;left:485.84px;top:325.9px" width="8" height="22"><path d="M0 6.6 L3.8 2.8 L7.6 6.6 Z M0 15.9 L7.6 15.9 L3.8 19.7 Z" fill="#000"/></svg>
<div style="left:442.74px;top:176px;width:6px;height:2px;background:#efefef"></div>
<div style="left:442.74px;top:184.43px;width:6px;height:2px;background:#efefef"></div>
<div style="left:442.74px;top:192.86px;width:6px;height:2px;background:#efefef"></div>
<div style="left:442.74px;top:201.29px;width:6px;height:2px;background:#efefef"></div>
<div style="left:442.74px;top:209.72px;width:6px;height:2px;background:#efefef"></div>
<div style="left:442.74px;top:218.15px;width:6px;height:2px;background:#efefef"></div>
<div style="left:442.74px;top:226.58px;width:12px;height:2px;background:#efefef"></div>
<div style="left:442.74px;top:235.01px;width:6px;height:2px;background:#efefef"></div>
<div style="left:442.74px;top:243.44px;width:6px;height:2px;background:#efefef"></div>
<div style="left:442.74px;top:251.87px;width:6px;height:2px;background:#efefef"></div>
<div style="left:442.74px;top:260.3px;width:6px;height:2px;background:#efefef"></div>
<div style="left:442.74px;top:268.73px;width:6px;height:2px;background:#efefef"></div>
<div style="left:442.74px;top:277.16px;width:6px;height:2px;background:#efefef"></div>
<div style="left:464.54px;top:165px;width:16px;height:123px;background:#dc7650"></div>
<div style="left:468.54px;top:167.5px;width:8px;height:118.8px;background:#a9a9a9;border:1px solid #f6dccb;box-sizing:border-box"></div>
<svg style="position:absolute;left:459.64px;top:222.05px" width="26" height="20"><defs><linearGradient id="tg6" x1="0" y1="0" x2="0" y2="1"><stop offset="0" stop-color="#5e5e5e"/><stop offset="0.5" stop-color="#c2c2c2"/><stop offset="0.62" stop-color="#b0b0b0"/><stop offset="1" stop-color="#505050"/></linearGradient></defs><path d="M0.8 10 L9 1.2 L22.5 1.2 Q24.6 1.2 24.6 3.3 L24.6 16.7 Q24.6 18.8 22.5 18.8 L9 18.8 Z" fill="url(#tg6)" stroke="#303030" stroke-width="1.15"/></svg>
<div style="left:438.39px;top:358px;width:56.9px;height:25.75px;background:#e5e5e5"></div>
<div class="t" style="left:442.14px;top:363.44px;font-size:14.53px;color:#2e2e2e;transform:scaleX(0.9049);transform-origin:0 0;">Peak</div>
<svg style="position:absolute;left:479.64px;top:367px" width="12" height="8"><path d="M1 1.5 L5.5 6 L10 1.5" fill="none" stroke="#555" stroke-width="1.1"/></svg>
<div style="left:450.94px;top:393.75px;width:16px;height:16px;background:#fff;border:1.5px solid #333;box-sizing:border-box"></div>
<div class="t" style="left:474.94px;top:394.69px;font-size:14.53px;color:#2e2e2e;">7</div>
<div style="left:499.58px;top:137.75px;width:61.4px;height:26px;background:#fff"></div>
<div class="t" style="left:501.08px;top:141.89px;font-size:14.24px;color:#2e2e2e;transform:scaleX(0.9500);transform-origin:0 0;">-0.9</div>
<div style="left:543.48px;top:139.25px;width:17.2px;height:10.75px;background:#e4e4e4;border:1px solid #c4c4c4;box-sizing:border-box"></div>
<div style="left:543.48px;top:150.95px;width:17.2px;height:10px;background:#e4e4e4;border:1px solid #c4c4c4;box-sizing:border-box"></div>
<svg style="position:absolute;left:548.28px;top:139.25px" width="8" height="22"><path d="M0 6.6 L3.8 2.8 L7.6 6.6 Z M0 15.9 L7.6 15.9 L3.8 19.7 Z" fill="#000"/></svg>
<div style="left:499.58px;top:291.25px;width:61.4px;height:25.75px;background:#fff"></div>
<div class="t" style="left:501.08px;top:295.39px;font-size:14.24px;color:#2e2e2e;transform:scaleX(0.9500);transform-origin:0 0;">2177</div>
<div style="left:543.48px;top:292.75px;width:17.2px;height:10.75px;background:#e4e4e4;border:1px solid #c4c4c4;box-sizing:border-box"></div>
<div style="left:543.48px;top:304.45px;width:17.2px;height:10px;background:#e4e4e4;border:1px solid #c4c4c4;box-sizing:border-box"></div>
<svg style="position:absolute;left:548.28px;top:292.75px" width="8" height="22"><path d="M0 6.6 L3.8 2.8 L7.6 6.6 Z M0 15.9 L7.6 15.9 L3.8 19.7 Z" fill="#000"/></svg>
<div style="left:499.58px;top:324.4px;width:61.4px;height:25.6px;background:#fff"></div>
<div class="t" style="left:501.08px;top:328.54px;font-size:14.24px;color:#2e2e2e;transform:scaleX(0.9500);transform-origin:0 0;">1.40</div>
<div style="left:543.48px;top:325.9px;width:17.2px;height:10.75px;background:#e4e4e4;border:1px solid #c4c4c4;box-sizing:border-box"></div>
<div style="left:543.48px;top:337.6px;width:17.2px;height:10px;background:#e4e4e4;border:1px solid #c4c4c4;box-sizing:border-box"></div>
<svg style="position:absolute;left:548.28px;top:325.9px" width="8" height="22"><path d="M0 6.6 L3.8 2.8 L7.6 6.6 Z M0 15.9 L7.6 15.9 L3.8 19.7 Z" fill="#000"/></svg>
<div style="left:505.18px;top:176px;width:6px;height:2px;background:#efefef"></div>
<div style="left:505.18px;top:184.43px;width:6px;height:2px;background:#efefef"></div>
<div style="left:505.18px;top:192.86px;width:6px;height:2px;background:#efefef"></div>
<div style="left:505.18px;top:201.29px;width:6px;height:2px;background:#efefef"></div>
<div style="left:505.18px;top:209.72px;width:6px;height:2px;background:#efefef"></div>
<div style="left:505.18px;top:218.15px;width:6px;height:2px;background:#efefef"></div>
<div style="left:505.18px;top:226.58px;width:12px;height:2px;background:#efefef"></div>
<div style="left:505.18px;top:235.01px;width:6px;height:2px;background:#efefef"></div>
<div style="left:505.18px;top:243.44px;width:6px;height:2px;background:#efefef"></div>
<div style="left:505.18px;top:251.87px;width:6px;height:2px;background:#efefef"></div>
<div style="left:505.18px;top:260.3px;width:6px;height:2px;background:#efefef"></div>
<div style="left:505.18px;top:268.73px;width:6px;height:2px;background:#efefef"></div>
<div style="left:505.18px;top:277.16px;width:6px;height:2px;background:#efefef"></div>
<div style="left:526.98px;top:165px;width:16px;height:123px;background:#dc7650"></div>
<div style="left:530.98px;top:167.5px;width:8px;height:118.8px;background:#a9a9a9;border:1px solid #f6dccb;box-sizing:border-box"></div>
<svg style="position:absolute;left:522.08px;top:220.79px" width="26" height="20"><defs><linearGradient id="tg7" x1="0" y1="0" x2="0" y2="1"><stop offset="0" stop-color="#5e5e5e"/><stop offset="0.5" stop-color="#c2c2c2"/><stop offset="0.62" stop-color="#b0b0b0"/><stop offset="1" stop-color="#505050"/></linearGradient></defs><path d="M0.8 10 L9 1.2 L22.5 1.2 Q24.6 1.2 24.6 3.3 L24.6 16.7 Q24.6 18.8 22.5 18.8 L9 18.8 Z" fill="url(#tg7)" stroke="#303030" stroke-width="1.15"/></svg>
<div style="left:500.83px;top:358px;width:56.9px;height:25.75px;background:#e5e5e5"></div>
<div class="t" style="left:504.58px;top:363.44px;font-size:14.53px;color:#2e2e2e;transform:scaleX(0.9049);transform-origin:0 0;">Peak</div>
<svg style="position:absolute;left:542.08px;top:367px" width="12" height="8"><path d="M1 1.5 L5.5 6 L10 1.5" fill="none" stroke="#555" stroke-width="1.1"/></svg>
<div style="left:513.38px;top:393.75px;width:16px;height:16px;background:#fff;border:1.5px solid #333;box-sizing:border-box"></div>
<div class="t" style="left:537.38px;top:394.69px;font-size:14.53px;color:#2e2e2e;">8</div>
<div style="left:562.02px;top:137.75px;width:61.4px;height:26px;background:#fff"></div>
<div class="t" style="left:563.52px;top:141.89px;font-size:14.24px;color:#2e2e2e;transform:scaleX(0.9500);transform-origin:0 0;">-3.0</div>
<div style="left:605.92px;top:139.25px;width:17.2px;height:10.75px;background:#e4e4e4;border:1px solid #c4c4c4;box-sizing:border-box"></div>
<div style="left:605.92px;top:150.95px;width:17.2px;height:10px;background:#e4e4e4;border:1px solid #c4c4c4;box-sizing:border-box"></div>
<svg style="position:absolute;left:610.72px;top:139.25px" width="8" height="22"><path d="M0 6.6 L3.8 2.8 L7.6 6.6 Z M0 15.9 L7.6 15.9 L3.8 19.7 Z" fill="#000"/></svg>
<div style="left:562.02px;top:291.25px;width:61.4px;height:25.75px;background:#fff"></div>
<div class="t" style="left:563.52px;top:295.39px;font-size:14.24px;color:#2e2e2e;transform:scaleX(0.9500);transform-origin:0 0;">3252</div>
<div style="left:605.92px;top:292.75px;width:17.2px;height:10.75px;background:#e4e4e4;border:1px solid #c4c4c4;box-sizing:border-box"></div>
<div style="left:605.92px;top:304.45px;width:17.2px;height:10px;background:#e4e4e4;border:1px solid #c4c4c4;box-sizing:border-box"></div>
<svg style="position:absolute;left:610.72px;top:292.75px" width="8" height="22"><path d="M0 6.6 L3.8 2.8 L7.6 6.6 Z M0 15.9 L7.6 15.9 L3.8 19.7 Z" fill="#000"/></svg>
<div style="left:562.02px;top:324.4px;width:61.4px;height:25.6px;background:#fff"></div>
<div class="t" style="left:563.52px;top:328.54px;font-size:14.24px;color:#2e2e2e;transform:scaleX(0.9500);transform-origin:0 0;">1.40</div>
<div style="left:605.92px;top:325.9px;width:17.2px;height:10.75px;background:#e4e4e4;border:1px solid #c4c4c4;box-sizing:border-box"></div>
<div style="left:605.92px;top:337.6px;width:17.2px;height:10px;background:#e4e4e4;border:1px solid #c4c4c4;box-sizing:border-box"></div>
<svg style="position:absolute;left:610.72px;top:325.9px" width="8" height="22"><path d="M0 6.6 L3.8 2.8 L7.6 6.6 Z M0 15.9 L7.6 15.9 L3.8 19.7 Z" fill="#000"/></svg>
<div style="left:567.62px;top:176px;width:6px;height:2px;background:#efefef"></div>
<div style="left:567.62px;top:184.43px;width:6px;height:2px;background:#efefef"></div>
<div style="left:567.62px;top:192.86px;width:6px;height:2px;background:#efefef"></div>
<div style="left:567.62px;top:201.29px;width:6px;height:2px;background:#efefef"></div>
<div style="left:567.62px;top:209.72px;width:6px;height:2px;background:#efefef"></div>
<div style="left:567.62px;top:218.15px;width:6px;height:2px;background:#efefef"></div>
<div style="left:567.62px;top:226.58px;width:12px;height:2px;background:#efefef"></div>
<div style="left:567.62px;top:235.01px;width:6px;height:2px;background:#efefef"></div>
<div style="left:567.62px;top:243.44px;width:6px;height:2px;background:#efefef"></div>
<div style="left:567.62px;top:251.87px;width:6px;height:2px;background:#efefef"></div>
<div style="left:567.62px;top:260.3px;width:6px;height:2px;background:#efefef"></div>
<div style="left:567.62px;top:268.73px;width:6px;height:2px;background:#efefef"></div>
<div style="left:567.62px;top:277.16px;width:6px;height:2px;background:#efefef"></div>
<div style="left:589.42px;top:165px;width:16px;height:123px;background:#dc7650"></div>
<div style="left:593.42px;top:167.5px;width:8px;height:118.8px;background:#a9a9a9;border:1px solid #f6dccb;box-sizing:border-box"></div>
<svg style="position:absolute;left:584.52px;top:229.63px" width="26" height="20"><defs><linearGradient id="tg8" x1="0" y1="0" x2="0" y2="1"><stop offset="0" stop-color="#5e5e5e"/><stop offset="0.5" stop-color="#c2c2c2"/><stop offset="0.62" stop-color="#b0b0b0"/><stop offset="1" stop-color="#505050"/></linearGradient></defs><path d="M0.8 10 L9 1.2 L22.5 1.2 Q24.6 1.2 24.6 3.3 L24.6 16.7 Q24.6 18.8 22.5 18.8 L9 18.8 Z" fill="url(#tg8)" stroke="#303030" stroke-width="1.15"/></svg>
<div style="left:563.27px;top:358px;width:56.9px;height:25.75px;background:#e5e5e5"></div>
<div class="t" style="left:567.02px;top:363.44px;font-size:14.53px;color:#2e2e2e;transform:scaleX(0.9049);transform-origin:0 0;">Peak</div>
<svg style="position:absolute;left:604.52px;top:367px" width="12" height="8"><path d="M1 1.5 L5.5 6 L10 1.5" fill="none" stroke="#555" stroke-width="1.1"/></svg>
<div style="left:575.82px;top:393.75px;width:16px;height:16px;background:#fff;border:1.5px solid #333;box-sizing:border-box"></div>
<div class="t" style="left:599.82px;top:394.69px;font-size:14.53px;color:#2e2e2e;">9</div>
<div style="left:624.46px;top:137.75px;width:61.4px;height:26px;background:#fff"></div>
<div class="t" style="left:625.96px;top:141.89px;font-size:14.24px;color:#2e2e2e;transform:scaleX(0.9500);transform-origin:0 0;">-0.3</div>
<div style="left:668.36px;top:139.25px;width:17.2px;height:10.75px;background:#e4e4e4;border:1px solid #c4c4c4;box-sizing:border-box"></div>
<div style="left:668.36px;top:150.95px;width:17.2px;height:10px;background:#e4e4e4;border:1px solid #c4c4c4;box-sizing:border-box"></div>
<svg style="position:absolute;left:673.16px;top:139.25px" width="8" height="22"><path d="M0 6.6 L3.8 2.8 L7.6 6.6 Z M0 15.9 L7.6 15.9 L3.8 19.7 Z" fill="#000"/></svg>
<div style="left:624.46px;top:291.25px;width:61.4px;height:25.75px;background:#fff"></div>
<div class="t" style="left:625.96px;top:295.39px;font-size:14.24px;color:#2e2e2e;transform:scaleX(0.9500);transform-origin:0 0;">8067</div>
<div style="left:668.36px;top:292.75px;width:17.2px;height:10.75px;background:#e4e4e4;border:1px solid #c4c4c4;box-sizing:border-box"></div>
<div style="left:668.36px;top:304.45px;width:17.2px;height:10px;background:#e4e4e4;border:1px solid #c4c4c4;box-sizing:border-box"></div>
<svg style="position:absolute;left:673.16px;top:292.75px" width="8" height="22"><path d="M0 6.6 L3.8 2.8 L7.6 6.6 Z M0 15.9 L7.6 15.9 L3.8 19.7 Z" fill="#000"/></svg>
<div style="left:624.46px;top:324.4px;width:61.4px;height:25.6px;background:#fff"></div>
<div class="t" style="left:625.96px;top:328.54px;font-size:14.24px;color:#2e2e2e;transform:scaleX(0.9500);transform-origin:0 0;">1.40</div>
<div style="left:668.36px;top:325.9px;width:17.2px;height:10.75px;background:#e4e4e4;border:1px solid #c4c4c4;box-sizing:border-box"></div>
<div style="left:668.36px;top:337.6px;width:17.2px;height:10px;background:#e4e4e4;border:1px solid #c4c4c4;box-sizing:border-box"></div>
<svg style="position:absolute;left:673.16px;top:325.9px" width="8" height="22"><path d="M0 6.6 L3.8 2.8 L7.6 6.6 Z M0 15.9 L7.6 15.9 L3.8 19.7 Z" fill="#000"/></svg>
<div style="left:630.06px;top:176px;width:6px;height:2px;background:#efefef"></div>
<div style="left:630.06px;top:184.43px;width:6px;height:2px;background:#efefef"></div>
<div style="left:630.06px;top:192.86px;width:6px;height:2px;background:#efefef"></div>
<div style="left:630.06px;top:201.29px;width:6px;height:2px;background:#efefef"></div>
<div style="left:630.06px;top:209.72px;width:6px;height:2px;background:#efefef"></div>
<div style="left:630.06px;top:218.15px;width:6px;height:2px;background:#efefef"></div>
<div style="left:630.06px;top:226.58px;width:12px;height:2px;background:#efefef"></div>
<div style="left:630.06px;top:235.01px;width:6px;height:2px;background:#efefef"></div>
<div style="left:630.06px;top:243.44px;width:6px;height:2px;background:#efefef"></div>
<div style="left:630.06px;top:251.87px;width:6px;height:2px;background:#efefef"></div>
<div style="left:630.06px;top:260.3px;width:6px;height:2px;background:#efefef"></div>
<div style="left:630.06px;top:268.73px;width:6px;height:2px;background:#efefef"></div>
<div style="left:630.06px;top:277.16px;width:6px;height:2px;background:#efefef"></div>
<div style="left:651.86px;top:165px;width:16px;height:123px;background:#dc7650"></div>
<div style="left:655.86px;top:167.5px;width:8px;height:118.8px;background:#a9a9a9;border:1px solid #f6dccb;box-sizing:border-box"></div>
<svg style="position:absolute;left:646.96px;top:218.26px" width="26" height="20"><defs><linearGradient id="tg9" x1="0" y1="0" x2="0" y2="1"><stop offset="0" stop-color="#5e5e5e"/><stop offset="0.5" stop-color="#c2c2c2"/><stop offset="0.62" stop-color="#b0b0b0"/><stop offset="1" stop-color="#505050"/></linearGradient></defs><path d="M0.8 10 L9 1.2 L22.5 1.2 Q24.6 1.2 24.6 3.3 L24.6 16.7 Q24.6 18.8 22.5 18.8 L9 18.8 Z" fill="url(#tg9)" stroke="#303030" stroke-width="1.15"/></svg>
<div style="left:625.71px;top:358px;width:56.9px;height:25.75px;background:#e5e5e5"></div>
<div class="t" style="left:629.46px;top:363.44px;font-size:14.53px;color:#2e2e2e;transform:scaleX(0.9049);transform-origin:0 0;">Peak</div>
<svg style="position:absolute;left:666.96px;top:367px" width="12" height="8"><path d="M1 1.5 L5.5 6 L10 1.5" fill="none" stroke="#555" stroke-width="1.1"/></svg>
<div style="left:638.26px;top:393.75px;width:16px;height:16px;background:#fff;border:1.5px solid #333;box-sizing:border-box"></div>
<div class="t" style="left:664.26px;top:394.69px;font-size:14.53px;color:#2e2e2e;">10</div>
<div style="left:686.9px;top:137.75px;width:61.4px;height:26px;background:#fff"></div>
<div class="t" style="left:688.40px;top:141.89px;font-size:14.24px;color:#2e2e2e;transform:scaleX(0.9500);transform-origin:0 0;">0.0</div>
<div style="left:730.8px;top:139.25px;width:17.2px;height:10.75px;background:#e4e4e4;border:1px solid #c4c4c4;box-sizing:border-box"></div>
<div style="left:730.8px;top:150.95px;width:17.2px;height:10px;background:#e4e4e4;border:1px solid #c4c4c4;box-sizing:border-box"></div>
<svg style="position:absolute;left:735.6px;top:139.25px" width="8" height="22"><path d="M0 6.6 L3.8 2.8 L7.6 6.6 Z M0 15.9 L7.6 15.9 L3.8 19.7 Z" fill="#000"/></svg>
<div style="left:686.9px;top:291.25px;width:61.4px;height:25.75px;background:#fff"></div>
<div class="t" style="left:688.40px;top:295.39px;font-size:14.24px;color:#2e2e2e;transform:scaleX(0.9500);transform-origin:0 0;">12500</div>
<div style="left:730.8px;top:292.75px;width:17.2px;height:10.75px;background:#e4e4e4;border:1px solid #c4c4c4;box-sizing:border-box"></div>
<div style="left:730.8px;top:304.45px;width:17.2px;height:10px;background:#e4e4e4;border:1px solid #c4c4c4;box-sizing:border-box"></div>
<svg style="position:absolute;left:735.6px;top:292.75px" width="8" height="22"><path d="M0 6.6 L3.8 2.8 L7.6 6.6 Z M0 15.9 L7.6 15.9 L3.8 19.7 Z" fill="#000"/></svg>
<div style="left:686.9px;top:324.4px;width:61.4px;height:25.6px;background:#fff"></div>
<div class="t" style="left:688.40px;top:328.54px;font-size:14.24px;color:#2e2e2e;transform:scaleX(0.9500);transform-origin:0 0;">1.40</div>
<div style="left:730.8px;top:325.9px;width:17.2px;height:10.75px;background:#e4e4e4;border:1px solid #c4c4c4;box-sizing:border-box"></div>
<div style="left:730.8px;top:337.6px;width:17.2px;height:10px;background:#e4e4e4;border:1px solid #c4c4c4;box-sizing:border-box"></div>
<svg style="position:absolute;left:735.6px;top:325.9px" width="8" height="22"><path d="M0 6.6 L3.8 2.8 L7.6 6.6 Z M0 15.9 L7.6 15.9 L3.8 19.7 Z" fill="#000"/></svg>
<div style="left:692.5px;top:176px;width:6px;height:2px;background:#efefef"></div>
<div style="left:692.5px;top:184.43px;width:6px;height:2px;background:#efefef"></div>
<div style="left:692.5px;top:192.86px;width:6px;height:2px;background:#efefef"></div>
<div style="left:692.5px;top:201.29px;width:6px;height:2px;background:#efefef"></div>
<div style="left:692.5px;top:209.72px;width:6px;height:2px;background:#efefef"></div>
<div style="left:692.5px;top:218.15px;width:6px;height:2px;background:#efefef"></div>
<div style="left:692.5px;top:226.58px;width:12px;height:2px;background:#efefef"></div>
<div style="left:692.5px;top:235.01px;width:6px;height:2px;background:#efefef"></div>
<div style="left:692.5px;top:243.44px;width:6px;height:2px;background:#efefef"></div>
<div style="left:692.5px;top:251.87px;width:6px;height:2px;background:#efefef"></div>
<div style="left:692.5px;top:260.3px;width:6px;height:2px;background:#efefef"></div>
<div style="left:692.5px;top:268.73px;width:6px;height:2px;background:#efefef"></div>
<div style="left:692.5px;top:277.16px;width:6px;height:2px;background:#efefef"></div>
<div style="left:714.3px;top:165px;width:16px;height:123px;background:#dc7650"></div>
<div style="left:718.3px;top:167.5px;width:8px;height:118.8px;background:#a9a9a9;border:1px solid #f6dccb;box-sizing:border-box"></div>
<svg style="position:absolute;left:709.40px;top:217.00px" width="26" height="20"><defs><linearGradient id="tg10" x1="0" y1="0" x2="0" y2="1"><stop offset="0" stop-color="#5e5e5e"/><stop offset="0.5" stop-color="#c2c2c2"/><stop offset="0.62" stop-color="#b0b0b0"/><stop offset="1" stop-color="#505050"/></linearGradient></defs><path d="M0.8 10 L9 1.2 L22.5 1.2 Q24.6 1.2 24.6 3.3 L24.6 16.7 Q24.6 18.8 22.5 18.8 L9 18.8 Z" fill="url(#tg10)" stroke="#303030" stroke-width="1.15"/></svg>
<div style="left:688.15px;top:358px;width:56.9px;height:25.75px;background:#e5e5e5"></div>
<div class="t" style="left:691.90px;top:363.44px;font-size:14.53px;color:#2e2e2e;transform:scaleX(0.9049);transform-origin:0 0;">Peak</div>
<svg style="position:absolute;left:729.4px;top:367px" width="12" height="8"><path d="M1 1.5 L5.5 6 L10 1.5" fill="none" stroke="#555" stroke-width="1.1"/></svg>
<div style="left:700.7px;top:393.75px;width:16px;height:16px;background:#fff;border:1.5px solid #333;box-sizing:border-box"></div>
<div class="t" style="left:726.70px;top:394.69px;font-size:14.53px;color:#2e2e2e;">11</div>
<div class="t" style="left:18.10px;top:141.93px;font-size:13.95px;color:#2e2e2e;transform:scaleX(0.9745);transform-origin:0 0;">Gain:</div>
<div class="t" style="left:10.00px;top:168.29px;font-size:14.53px;color:#2e2e2e;transform:scaleX(0.9569);transform-origin:0 0;">+12dB</div>
<div class="t" style="left:16.90px;top:186.19px;font-size:14.53px;color:#2e2e2e;transform:scaleX(0.9812);transform-origin:0 0;">+8dB</div>
<div class="t" style="left:16.90px;top:204.09px;font-size:14.53px;color:#2e2e2e;transform:scaleX(0.9812);transform-origin:0 0;">+4dB</div>
<div class="t" style="left:26.20px;top:221.99px;font-size:14.53px;color:#2e2e2e;transform:scaleX(0.9436);transform-origin:0 0;">0dB</div>
<div class="t" style="left:21.10px;top:239.89px;font-size:14.53px;color:#2e2e2e;transform:scaleX(0.9610);transform-origin:0 0;">-4dB</div>
<div class="t" style="left:21.10px;top:257.79px;font-size:14.53px;color:#2e2e2e;transform:scaleX(0.9610);transform-origin:0 0;">-8dB</div>
<div class="t" style="left:12.90px;top:275.69px;font-size:14.53px;color:#2e2e2e;transform:scaleX(0.9722);transform-origin:0 0;">-12dB</div>
<div class="t" style="left:19.25px;top:299.94px;font-size:14.24px;color:#2e2e2e;transform:scaleX(0.9475);transform-origin:0 0;">Freq:</div>
<div class="t" style="left:36.25px;top:327.44px;font-size:14.24px;color:#2e2e2e;transform:scaleX(0.9640);transform-origin:0 0;">Q:</div>
<div class="t" style="left:15.75px;top:363.74px;font-size:14.24px;color:#2e2e2e;">Type:</div>
<div class="t" style="left:22.00px;top:393.74px;font-size:14.24px;color:#2e2e2e;transform:scaleX(0.8864);transform-origin:0 0;">OFF:</div>
<div style="left:779.5px;top:140.5px;width:272.5px;height:149.5px;border:1px solid #ebebeb;box-sizing:border-box"></div>
<div style="left:1085px;top:140.5px;width:271.75px;height:149.5px;border:1px solid #ebebeb;box-sizing:border-box"></div>
<div style="left:797.2px;top:192.3px;width:223.3px;height:24.5px;background:#a9a9a9"></div>
<div style="left:797.2px;top:197.8px;width:223.3px;height:15px;background:#a85858"></div>
<div style="left:800.2px;top:200.8px;width:217.3px;height:9.3px;background:#fdf0f0"></div>
<div style="left:801.7px;top:202.3px;width:214.3px;height:6.4px;background:#b3b3b3"></div>
<div style="left:801.7px;top:202.3px;width:37.8px;height:6.4px;background:#1668c4"></div>
<div style="left:836.5px;top:196.1px;width:18.2px;height:18.7px;background:linear-gradient(#4cb84c,#36a23a 55%,#40ae46);border:1px solid #2c8c32;border-radius:3px;box-sizing:border-box"></div>
<div style="left:1113px;top:192.5px;width:217.5px;height:24.5px;background:#a9a9a9"></div>
<div style="left:1113px;top:198px;width:217.5px;height:15px;background:#a85858"></div>
<div style="left:1116px;top:201px;width:211.5px;height:9.3px;background:#fdf0f0"></div>
<div style="left:1117.5px;top:202.5px;width:208.5px;height:6.4px;background:#b3b3b3"></div>
<div style="left:1117.5px;top:202.5px;width:165.5px;height:6.4px;background:#1668c4"></div>
<div style="left:1280px;top:196.3px;width:18.2px;height:18.7px;background:linear-gradient(#4cb84c,#36a23a 55%,#40ae46);border:1px solid #2c8c32;border-radius:3px;box-sizing:border-box"></div>
<div class="t" style="left:803.00px;top:157.51px;font-size:20.06px;color:#2e2e2e;transform:scaleX(0.8864);transform-origin:0 0;">HPF Freq:</div>
<div style="left:903.75px;top:152px;width:87.5px;height:35px;background:#fff;border:1px solid #c4c4c4;box-sizing:border-box"></div>
<div class="t" style="left:906.50px;top:159.00px;font-size:18.90px;color:#2e2e2e;transform:scaleX(1.0090);transform-origin:0 0;">63</div>
<div style="left:972px;top:154px;width:17px;height:14.75px;background:#e6e6e6;border:1px solid #c8c8c8;box-sizing:border-box"></div>
<div style="left:972px;top:169.75px;width:17px;height:14.75px;background:#e6e6e6;border:1px solid #c8c8c8;box-sizing:border-box"></div>
<svg style="position:absolute;left:976.5px;top:154px" width="8" height="30.5"><path d="M0 9.625 L4 5.625 L8 9.625 Z M0 21.375 L8 21.375 L4 25.375 Z" fill="#000"/></svg>
<div class="t" style="left:1005.00px;top:163.75px;font-size:19.19px;color:#2e2e2e;">Hz</div>
<div class="t" style="left:803.00px;top:247.01px;font-size:19.77px;color:#2e2e2e;transform:scaleX(0.9204);transform-origin:0 0;">Type:</div>
<div style="left:883px;top:238.75px;width:137.5px;height:35.75px;background:#e5e5e5;border:1px solid #adadad;box-sizing:border-box"></div>
<div class="t" style="left:889.50px;top:248.50px;font-size:19.48px;color:#2e2e2e;transform:scaleX(0.9300);transform-origin:0 0;">LR 12dB</div>
<svg style="position:absolute;left:1004px;top:253.5px" width="12" height="9"><path d="M1 1.5 L5.5 6 L10 1.5" fill="none" stroke="#555" stroke-width="1.1"/></svg>
<div class="t" style="left:1119.30px;top:156.76px;font-size:20.06px;color:#2e2e2e;transform:scaleX(0.8825);transform-origin:0 0;">LPF Freq:</div>
<div style="left:1216px;top:149.5px;width:87.5px;height:35px;background:#fff;border:1px solid #c4c4c4;box-sizing:border-box"></div>
<div class="t" style="left:1220.00px;top:157.23px;font-size:18.02px;color:#2e2e2e;transform:scaleX(1.0813);transform-origin:0 0;">18660</div>
<div style="left:1284.25px;top:152px;width:17px;height:14.5px;background:#e6e6e6;border:1px solid #c8c8c8;box-sizing:border-box"></div>
<div style="left:1284.25px;top:167.5px;width:17px;height:14.5px;background:#e6e6e6;border:1px solid #c8c8c8;box-sizing:border-box"></div>
<svg style="position:absolute;left:1288.75px;top:152px" width="8" height="30"><path d="M0 9.5 L4 5.5 L8 9.5 Z M0 21 L8 21 L4 25 Z" fill="#000"/></svg>
<div class="t" style="left:1313.75px;top:161.25px;font-size:19.19px;color:#2e2e2e;">Hz</div>
<div class="t" style="left:1114.25px;top:247.01px;font-size:19.77px;color:#2e2e2e;transform:scaleX(0.9204);transform-origin:0 0;">Type:</div>
<div style="left:1194.75px;top:236.25px;width:135.25px;height:35.75px;background:#e5e5e5;border:1px solid #adadad;box-sizing:border-box"></div>
<div class="t" style="left:1200.50px;top:246.00px;font-size:19.48px;color:#2e2e2e;transform:scaleX(0.9300);transform-origin:0 0;">LR 12dB</div>
<svg style="position:absolute;left:1313.5px;top:251.5px" width="12" height="9"><path d="M1 1.5 L5.5 6 L10 1.5" fill="none" stroke="#555" stroke-width="1.1"/></svg>
<div style="left:1084.7px;top:334.3px;width:16.5px;height:16px;background:#fff;border:1.5px solid #333;box-sizing:border-box"></div>
<div class="t" style="left:1110.80px;top:333.81px;font-size:20.06px;color:#2e2e2e;transform:scaleX(0.9032);transform-origin:0 0;">Reset Freq</div>
<div style="left:1217.5px;top:325.4px;width:111.8px;height:37.9px;background:#e1e1e1;border:1px solid #adadad;box-sizing:border-box"></div>
<div class="t" style="left:1234.50px;top:335.61px;font-size:20.06px;color:#2e2e2e;transform:scaleX(0.8740);transform-origin:0 0;">EQ Reset</div>
<div style="left:1085.9px;top:392px;width:16.5px;height:16px;background:#fff;border:1.5px solid #333;box-sizing:border-box"></div>
<div class="t" style="left:1112.40px;top:390.51px;font-size:20.06px;color:#2e2e2e;transform:scaleX(0.8971);transform-origin:0 0;">Reset Q</div>
<div style="left:1215.9px;top:392px;width:16.5px;height:16px;background:#fff;border:1.5px solid #333;box-sizing:border-box"></div>
<div class="t" style="left:1241.70px;top:390.51px;font-size:20.06px;color:#2e2e2e;transform:scaleX(0.8771);transform-origin:0 0;">EQ Bypass</div>
<svg style="position:absolute;left:0;top:0" width="1384" height="847">
<rect x="12.5" y="430" width="1349.5" height="405" fill="#000"/>
<line x1="65" y1="463.5" x2="1350.7" y2="463.5" stroke="#12a412" stroke-width="1"/>
<line x1="65" y1="484.5" x2="1350.7" y2="484.5" stroke="#12a412" stroke-width="1"/>
<line x1="65" y1="504.5" x2="1350.7" y2="504.5" stroke="#12a412" stroke-width="1"/>
<line x1="65" y1="525.5" x2="1350.7" y2="525.5" stroke="#12a412" stroke-width="1"/>
<line x1="65" y1="545.5" x2="1350.7" y2="545.5" stroke="#12a412" stroke-width="1"/>
<line x1="65" y1="565.5" x2="1350.7" y2="565.5" stroke="#12a412" stroke-width="1"/>
<line x1="65" y1="586.5" x2="1350.7" y2="586.5" stroke="#12a412" stroke-width="1"/>
<line x1="65" y1="606.5" x2="1350.7" y2="606.5" stroke="#12a412" stroke-width="1"/>
<line x1="65" y1="627.5" x2="1350.7" y2="627.5" stroke="#9be22a" stroke-width="1"/>
<line x1="65" y1="647.5" x2="1350.7" y2="647.5" stroke="#12a412" stroke-width="1"/>
<line x1="65" y1="668.5" x2="1350.7" y2="668.5" stroke="#12a412" stroke-width="1"/>
<line x1="65" y1="688.5" x2="1350.7" y2="688.5" stroke="#12a412" stroke-width="1"/>
<line x1="65" y1="708.5" x2="1350.7" y2="708.5" stroke="#12a412" stroke-width="1"/>
<line x1="65" y1="729.5" x2="1350.7" y2="729.5" stroke="#12a412" stroke-width="1"/>
<line x1="65" y1="749.5" x2="1350.7" y2="749.5" stroke="#12a412" stroke-width="1"/>
<line x1="65" y1="770.5" x2="1350.7" y2="770.5" stroke="#12a412" stroke-width="1"/>
<line x1="65" y1="790.5" x2="1350.7" y2="790.5" stroke="#12a412" stroke-width="1"/>
<line x1="179.5" y1="443" x2="179.5" y2="810.5" stroke="#12a412" stroke-width="1"/>
<line x1="246.5" y1="443" x2="246.5" y2="810.5" stroke="#12a412" stroke-width="1"/>
<line x1="294.5" y1="443" x2="294.5" y2="810.5" stroke="#12a412" stroke-width="1"/>
<line x1="330.5" y1="443" x2="330.5" y2="810.5" stroke="#12a412" stroke-width="1"/>
<line x1="361.5" y1="443" x2="361.5" y2="810.5" stroke="#12a412" stroke-width="1"/>
<line x1="386.5" y1="443" x2="386.5" y2="810.5" stroke="#12a412" stroke-width="1"/>
<line x1="408.5" y1="443" x2="408.5" y2="810.5" stroke="#12a412" stroke-width="1"/>
<line x1="428.5" y1="443" x2="428.5" y2="810.5" stroke="#12a412" stroke-width="1"/>
<line x1="445.5" y1="443" x2="445.5" y2="810.5" stroke="#a6ee3a" stroke-width="1"/>
<line x1="559.5" y1="443" x2="559.5" y2="810.5" stroke="#12a412" stroke-width="1"/>
<line x1="626.5" y1="443" x2="626.5" y2="810.5" stroke="#12a412" stroke-width="1"/>
<line x1="674.5" y1="443" x2="674.5" y2="810.5" stroke="#12a412" stroke-width="1"/>
<line x1="711.5" y1="443" x2="711.5" y2="810.5" stroke="#12a412" stroke-width="1"/>
<line x1="741.5" y1="443" x2="741.5" y2="810.5" stroke="#12a412" stroke-width="1"/>
<line x1="766.5" y1="443" x2="766.5" y2="810.5" stroke="#12a412" stroke-width="1"/>
<line x1="788.5" y1="443" x2="788.5" y2="810.5" stroke="#12a412" stroke-width="1"/>
<line x1="808.5" y1="443" x2="808.5" y2="810.5" stroke="#12a412" stroke-width="1"/>
<line x1="825.5" y1="443" x2="825.5" y2="810.5" stroke="#a6ee3a" stroke-width="1"/>
<line x1="940.5" y1="443" x2="940.5" y2="810.5" stroke="#12a412" stroke-width="1"/>
<line x1="1007.5" y1="443" x2="1007.5" y2="810.5" stroke="#12a412" stroke-width="1"/>
<line x1="1054.5" y1="443" x2="1054.5" y2="810.5" stroke="#12a412" stroke-width="1"/>
<line x1="1091.5" y1="443" x2="1091.5" y2="810.5" stroke="#12a412" stroke-width="1"/>
<line x1="1121.5" y1="443" x2="1121.5" y2="810.5" stroke="#12a412" stroke-width="1"/>
<line x1="1146.5" y1="443" x2="1146.5" y2="810.5" stroke="#12a412" stroke-width="1"/>
<line x1="1168.5" y1="443" x2="1168.5" y2="810.5" stroke="#12a412" stroke-width="1"/>
<line x1="1188.5" y1="443" x2="1188.5" y2="810.5" stroke="#12a412" stroke-width="1"/>
<line x1="1205.5" y1="443" x2="1205.5" y2="810.5" stroke="#a6ee3a" stroke-width="1"/>
<line x1="1320.5" y1="443" x2="1320.5" y2="810.5" stroke="#12a412" stroke-width="1"/>
<line x1="1320.5" y1="443" x2="1320.5" y2="810.5" stroke="#12a412" stroke-width="1"/>
<rect x="65.5" y="443.5" width="1285" height="367" fill="none" stroke="#78e03c" stroke-width="1.3"/>
</svg>
<div class="t" style="left:22.33px;top:455.08px;font-size:16.13px;color:#e6e65c;">16dB</div>
<div class="t" style="left:22.33px;top:495.90px;font-size:16.13px;color:#e6e65c;">12dB</div>
<div class="t" style="left:31.30px;top:536.72px;font-size:16.13px;color:#e6e65c;">8dB</div>
<div class="t" style="left:31.30px;top:577.54px;font-size:16.13px;color:#e6e65c;">4dB</div>
<div class="t" style="left:31.30px;top:618.36px;font-size:16.13px;color:#e6e65c;">0dB</div>
<div class="t" style="left:25.93px;top:659.18px;font-size:16.13px;color:#e6e65c;">-4dB</div>
<div class="t" style="left:25.93px;top:700.00px;font-size:16.13px;color:#e6e65c;">-8dB</div>
<div class="t" style="left:16.96px;top:740.82px;font-size:16.13px;color:#e6e65c;">-12dB</div>
<div class="t" style="left:16.96px;top:781.64px;font-size:16.13px;color:#e6e65c;">-16dB</div>
<div class="t" style="left:47.50px;top:813.70px;font-size:15.41px;color:#e6e65c;">10Hz</div>
<div class="t" style="left:170.89px;top:813.70px;font-size:15.41px;color:#e6e65c;">20</div>
<div class="t" style="left:322.18px;top:813.70px;font-size:15.41px;color:#e6e65c;">50</div>
<div class="t" style="left:432.35px;top:813.70px;font-size:15.41px;color:#e6e65c;">100</div>
<div class="t" style="left:546.80px;top:813.70px;font-size:15.41px;color:#e6e65c;">200</div>
<div class="t" style="left:698.10px;top:813.70px;font-size:15.41px;color:#e6e65c;">500</div>
<div class="t" style="left:815.98px;top:813.70px;font-size:15.41px;color:#e6e65c;">1K</div>
<div class="t" style="left:930.43px;top:813.70px;font-size:15.41px;color:#e6e65c;">2K</div>
<div class="t" style="left:1081.73px;top:813.70px;font-size:15.41px;color:#e6e65c;">5K</div>
<div class="t" style="left:1191.90px;top:813.70px;font-size:15.41px;color:#e6e65c;">10K</div>
<div class="t" style="left:1306.35px;top:813.70px;font-size:15.41px;color:#e6e65c;">20K</div>
<svg style="position:absolute;left:0;top:0" width="1384" height="847"><defs><radialGradient id="mg" cx="50%" cy="50%" r="50%"><stop offset="0" stop-color="#857590"/><stop offset="0.5" stop-color="#8f4f9c"/><stop offset="1" stop-color="#a624ae"/></radialGradient><clipPath id="pc"><rect x="65" y="443" width="1286" height="368"/></clipPath></defs>
<circle cx="368.91" cy="627.00" r="11.8" fill="url(#mg)"/>
<text x="369.21" y="633.40" text-anchor="middle" font-family="Liberation Serif" font-weight="bold" font-size="19" fill="#151015">1</text>
<circle cx="427.80" cy="628.02" r="11.8" fill="url(#mg)"/>
<text x="428.10" y="634.42" text-anchor="middle" font-family="Liberation Serif" font-weight="bold" font-size="19" fill="#151015">2</text>
<circle cx="599.77" cy="636.19" r="11.8" fill="url(#mg)"/>
<text x="600.07" y="642.59" text-anchor="middle" font-family="Liberation Serif" font-weight="bold" font-size="19" fill="#151015">3</text>
<circle cx="712.59" cy="660.69" r="11.8" fill="url(#mg)"/>
<text x="712.89" y="667.09" text-anchor="middle" font-family="Liberation Serif" font-weight="bold" font-size="19" fill="#151015">4</text>
<circle cx="753.76" cy="672.95" r="11.8" fill="url(#mg)"/>
<text x="754.06" y="679.35" text-anchor="middle" font-family="Liberation Serif" font-weight="bold" font-size="19" fill="#151015">5</text>
<circle cx="793.84" cy="637.21" r="11.8" fill="url(#mg)"/>
<text x="794.14" y="643.61" text-anchor="middle" font-family="Liberation Serif" font-weight="bold" font-size="19" fill="#151015">6</text>
<circle cx="842.63" cy="639.25" r="11.8" fill="url(#mg)"/>
<text x="842.93" y="645.65" text-anchor="middle" font-family="Liberation Serif" font-weight="bold" font-size="19" fill="#151015">7</text>
<circle cx="953.85" cy="636.19" r="11.8" fill="url(#mg)"/>
<text x="954.15" y="642.59" text-anchor="middle" font-family="Liberation Serif" font-weight="bold" font-size="19" fill="#151015">8</text>
<circle cx="1020.12" cy="657.63" r="11.8" fill="url(#mg)"/>
<text x="1020.42" y="664.03" text-anchor="middle" font-family="Liberation Serif" font-weight="bold" font-size="19" fill="#151015">9</text>
<circle cx="1170.13" cy="630.06" r="11.8" fill="url(#mg)"/>
<text x="1162.13" y="635.46" textLength="16.5" lengthAdjust="spacingAndGlyphs" font-family="Liberation Serif" font-weight="bold" font-size="18" fill="#151015">10</text>
<circle cx="1242.45" cy="627.00" r="11.8" fill="url(#mg)"/>
<text x="1234.45" y="632.40" textLength="14" lengthAdjust="spacingAndGlyphs" font-family="Liberation Serif" font-weight="bold" font-size="18" fill="#151015">11</text>
<polyline points="200.00,819.38 200.57,818.84 201.14,818.30 201.71,817.76 202.28,817.22 202.85,816.68 203.42,816.14 203.99,815.60 204.56,815.06 205.13,814.53 205.70,813.99 206.27,813.45 206.84,812.92 207.41,812.38 207.98,811.85 208.55,811.31 209.12,810.78 209.69,810.24 210.27,809.71 210.84,809.18 211.41,808.64 211.98,808.11 212.55,807.58 213.12,807.05 213.69,806.52 214.26,805.99 214.83,805.46 215.40,804.93 215.97,804.40 216.54,803.88 217.11,803.35 217.68,802.82 218.25,802.29 218.82,801.77 219.39,801.24 219.96,800.72 220.53,800.19 221.10,799.67 221.67,799.15 222.24,798.62 222.81,798.10 223.38,797.58 223.95,797.06 224.52,796.54 225.09,796.02 225.66,795.50 226.23,794.98 226.80,794.46 227.37,793.95 227.94,793.43 228.51,792.91 229.08,792.40 229.65,791.88 230.23,791.36 230.80,790.85 231.37,790.34 231.94,789.82 232.51,789.31 233.08,788.80 233.65,788.29 234.22,787.78 234.79,787.27 235.36,786.76 235.93,786.25 236.50,785.74 237.07,785.23 237.64,784.72 238.21,784.22 238.78,783.71 239.35,783.21 239.92,782.70 240.49,782.20 241.06,781.69 241.63,781.19 242.20,780.69 242.77,780.19 243.34,779.68 243.91,779.18 244.48,778.68 245.05,778.19 245.62,777.69 246.19,777.19 246.76,776.69 247.33,776.20 247.90,775.70 248.47,775.20 249.04,774.71 249.61,774.22 250.19,773.72 250.76,773.23 251.33,772.74 251.90,772.25 252.47,771.76 253.04,771.27 253.61,770.78 254.18,770.29 254.75,769.80 255.32,769.31 255.89,768.83 256.46,768.34 257.03,767.86 257.60,767.37 258.17,766.89 258.74,766.41 259.31,765.93 259.88,765.44 260.45,764.96 261.02,764.48 261.59,764.00 262.16,763.53 262.73,763.05 263.30,762.57 263.87,762.09 264.44,761.62 265.01,761.14 265.58,760.67 266.15,760.20 266.72,759.72 267.29,759.25 267.86,758.78 268.43,758.31 269.00,757.84 269.57,757.37 270.15,756.91 270.72,756.44 271.29,755.97 271.86,755.51 272.43,755.04 273.00,754.58 273.57,754.11 274.14,753.65 274.71,753.19 275.28,752.73 275.85,752.27 276.42,751.81 276.99,751.35 277.56,750.89 278.13,750.44 278.70,749.98 279.27,749.53 279.84,749.07 280.41,748.62 280.98,748.17 281.55,747.71 282.12,747.26 282.69,746.81 283.26,746.36 283.83,745.92 284.40,745.47 284.97,745.02 285.54,744.58 286.11,744.13 286.68,743.69 287.25,743.24 287.82,742.80 288.39,742.36 288.96,741.92 289.53,741.48 290.11,741.04 290.68,740.60 291.25,740.16 291.82,739.73 292.39,739.29 292.96,738.86 293.53,738.42 294.10,737.99 294.67,737.56 295.24,737.13 295.81,736.70 296.38,736.27 296.95,735.84 297.52,735.41 298.09,734.99 298.66,734.56 299.23,734.14 299.80,733.71 300.37,733.29 300.94,732.87 301.51,732.45 302.08,732.03 302.65,731.61 303.22,731.19 303.79,730.78 304.36,730.36 304.93,729.94 305.50,729.53 306.07,729.12 306.64,728.70 307.21,728.29 307.78,727.88 308.35,727.47 308.92,727.07 309.49,726.66 310.07,726.25 310.64,725.85 311.21,725.44 311.78,725.04 312.35,724.64 312.92,724.23 313.49,723.83 314.06,723.43 314.63,723.03 315.20,722.64 315.77,722.24 316.34,721.84 316.91,721.45 317.48,721.06 318.05,720.66 318.62,720.27 319.19,719.88 319.76,719.49 320.33,719.10 320.90,718.72 321.47,718.33 322.04,717.94 322.61,717.56 323.18,717.18 323.75,716.79 324.32,716.41 324.89,716.03 325.46,715.65 326.03,715.27 326.60,714.90 327.17,714.52 327.74,714.15 328.31,713.77 328.88,713.40 329.45,713.03 330.03,712.66 330.60,712.29 331.17,711.92 331.74,711.55 332.31,711.18 332.88,710.82 333.45,710.45 334.02,710.09 334.59,709.73 335.16,709.37 335.73,709.01 336.30,708.65 336.87,708.29 337.44,707.93 338.01,707.58 338.58,707.22 339.15,706.87 339.72,706.52 340.29,706.16 340.86,705.81 341.43,705.46 342.00,705.12 342.57,704.77 343.14,704.42 343.71,704.08 344.28,703.73 344.85,703.39 345.42,703.05 345.99,702.71 346.56,702.37 347.13,702.03 347.70,701.69 348.27,701.36 348.84,701.02 349.41,700.69 349.98,700.36 350.56,700.02 351.13,699.69 351.70,699.36 352.27,699.04 352.84,698.71 353.41,698.38 353.98,698.06 354.55,697.73 355.12,697.41 355.69,697.09 356.26,696.77 356.83,696.45 357.40,696.13 357.97,695.82 358.54,695.50 359.11,695.19 359.68,694.87 360.25,694.56 360.82,694.25 361.39,693.94 361.96,693.63 362.53,693.32 363.10,693.01 363.67,692.71 364.24,692.40 364.81,692.10 365.38,691.80 365.95,691.50 366.52,691.20 367.09,690.90 367.66,690.60 368.23,690.31 368.80,690.01 369.37,689.72 369.94,689.42 370.52,689.13 371.09,688.84 371.66,688.55 372.23,688.26 372.80,687.98 373.37,687.69 373.94,687.40 374.51,687.12 375.08,686.84 375.65,686.56 376.22,686.28 376.79,686.00 377.36,685.72 377.93,685.44 378.50,685.16 379.07,684.89 379.64,684.62 380.21,684.34 380.78,684.07 381.35,683.80 381.92,683.53 382.49,683.27 383.06,683.00 383.63,682.73 384.20,682.47 384.77,682.20 385.34,681.94 385.91,681.68 386.48,681.42 387.05,681.16 387.62,680.90 388.19,680.65 388.76,680.39 389.33,680.14 389.90,679.88 390.48,679.63 391.05,679.38 391.62,679.13 392.19,678.88 392.76,678.63 393.33,678.39 393.90,678.14 394.47,677.90 395.04,677.65 395.61,677.41 396.18,677.17 396.75,676.93 397.32,676.69 397.89,676.45 398.46,676.21 399.03,675.98 399.60,675.74 400.17,675.51 400.74,675.28 401.31,675.04 401.88,674.81 402.45,674.58 403.02,674.35 403.59,674.13 404.16,673.90 404.73,673.67 405.30,673.45 405.87,673.23 406.44,673.00 407.01,672.78 407.58,672.56 408.15,672.34 408.72,672.12 409.29,671.91 409.86,671.69 410.44,671.47 411.01,671.26 411.58,671.05 412.15,670.83 412.72,670.62 413.29,670.41 413.86,670.20 414.43,669.99 415.00,669.78 415.57,669.58 416.14,669.37 416.71,669.17 417.28,668.96 417.85,668.76 418.42,668.56 418.99,668.36 419.56,668.16 420.13,667.96 420.70,667.76 421.27,667.56 421.84,667.36 422.41,667.17 422.98,666.97 423.55,666.78 424.12,666.59 424.69,666.39 425.26,666.20 425.83,666.01 426.40,665.82 426.97,665.64 427.54,665.45 428.11,665.26 428.68,665.08 429.25,664.89 429.82,664.71 430.40,664.52 430.97,664.34 431.54,664.16 432.11,663.98 432.68,663.80 433.25,663.62 433.82,663.45 434.39,663.27 434.96,663.09 435.53,662.92 436.10,662.74 436.67,662.57 437.24,662.40 437.81,662.23 438.38,662.06 438.95,661.89 439.52,661.72 440.09,661.55 440.66,661.38 441.23,661.22 441.80,661.05 442.37,660.89 442.94,660.73 443.51,660.56 444.08,660.40 444.65,660.24 445.22,660.08 445.79,659.92 446.36,659.77 446.93,659.61 447.50,659.45 448.07,659.30 448.64,659.15 449.21,658.99 449.78,658.84 450.36,658.69 450.93,658.54 451.50,658.39 452.07,658.24 452.64,658.09 453.21,657.95 453.78,657.80 454.35,657.66 454.92,657.51 455.49,657.37 456.06,657.23 456.63,657.09 457.20,656.95 457.77,656.81 458.34,656.67 458.91,656.54 459.48,656.40 460.05,656.27 460.62,656.13 461.19,656.00 461.76,655.87 462.33,655.74 462.90,655.61 463.47,655.48 464.04,655.35 464.61,655.22 465.18,655.10 465.75,654.97 466.32,654.85 466.89,654.72 467.46,654.60 468.03,654.48 468.60,654.36 469.17,654.24 469.74,654.12 470.32,654.01 470.89,653.89 471.46,653.77 472.03,653.66 472.60,653.55 473.17,653.43 473.74,653.32 474.31,653.21 474.88,653.10 475.45,653.00 476.02,652.89 476.59,652.78 477.16,652.68 477.73,652.57 478.30,652.47 478.87,652.37 479.44,652.27 480.01,652.17 480.58,652.07 481.15,651.97 481.72,651.87 482.29,651.78 482.86,651.68 483.43,651.59 484.00,651.50 484.57,651.40 485.14,651.31 485.71,651.22 486.28,651.13 486.85,651.05 487.42,650.96 487.99,650.87 488.56,650.79 489.13,650.71 489.70,650.62 490.28,650.54 490.85,650.46 491.42,650.38 491.99,650.30 492.56,650.23 493.13,650.15 493.70,650.07 494.27,650.00 494.84,649.93 495.41,649.86 495.98,649.78 496.55,649.71 497.12,649.65 497.69,649.58 498.26,649.51 498.83,649.44 499.40,649.38 499.97,649.32 500.54,649.25 501.11,649.19 501.68,649.13 502.25,649.07 502.82,649.01 503.39,648.96 503.96,648.90 504.53,648.85 505.10,648.79 505.67,648.74 506.24,648.69 506.81,648.64 507.38,648.59 507.95,648.54 508.52,648.49 509.09,648.44 509.66,648.40 510.24,648.35 510.81,648.31 511.38,648.27 511.95,648.23 512.52,648.19 513.09,648.15 513.66,648.11 514.23,648.08 514.80,648.04 515.37,648.01 515.94,647.97 516.51,647.94 517.08,647.91 517.65,647.88 518.22,647.85 518.79,647.82 519.36,647.80 519.93,647.77 520.50,647.75 521.07,647.73 521.64,647.70 522.21,647.68 522.78,647.66 523.35,647.65 523.92,647.63 524.49,647.61 525.06,647.60 525.63,647.58 526.20,647.57 526.77,647.56 527.34,647.55 527.91,647.54 528.48,647.54 529.05,647.53 529.62,647.52 530.20,647.52 530.77,647.52 531.34,647.52 531.91,647.51 532.48,647.52 533.05,647.52 533.62,647.52 534.19,647.53 534.76,647.53 535.33,647.54 535.90,647.55 536.47,647.56 537.04,647.57 537.61,647.58 538.18,647.59 538.75,647.61 539.32,647.62 539.89,647.64 540.46,647.66 541.03,647.68 541.60,647.70 542.17,647.72 542.74,647.74 543.31,647.77 543.88,647.79 544.45,647.82 545.02,647.85 545.59,647.87 546.16,647.91 546.73,647.94 547.30,647.97 547.87,648.00 548.44,648.04 549.01,648.08 549.58,648.11 550.16,648.15 550.73,648.19 551.30,648.23 551.87,648.28 552.44,648.32 553.01,648.37 553.58,648.41 554.15,648.46 554.72,648.51 555.29,648.56 555.86,648.61 556.43,648.66 557.00,648.72 557.57,648.77 558.14,648.83 558.71,648.88 559.28,648.94 559.85,649.00 560.42,649.06 560.99,649.12 561.56,649.18 562.13,649.24 562.70,649.31 563.27,649.37 563.84,649.44 564.41,649.51 564.98,649.57 565.55,649.64 566.12,649.71 566.69,649.78 567.26,649.85 567.83,649.93 568.40,650.00 568.97,650.07 569.54,650.15 570.12,650.22 570.69,650.30 571.26,650.38 571.83,650.45 572.40,650.53 572.97,650.61 573.54,650.69 574.11,650.77 574.68,650.85 575.25,650.93 575.82,651.01 576.39,651.09 576.96,651.18 577.53,651.26 578.10,651.34 578.67,651.43 579.24,651.51 579.81,651.59 580.38,651.68 580.95,651.76 581.52,651.84 582.09,651.93 582.66,652.01 583.23,652.10 583.80,652.18 584.37,652.27 584.94,652.35 585.51,652.44 586.08,652.52 586.65,652.60 587.22,652.69 587.79,652.77 588.36,652.86 588.93,652.94 589.50,653.02 590.08,653.11 590.65,653.19 591.22,653.27 591.79,653.35 592.36,653.44 592.93,653.52 593.50,653.60 594.07,653.68 594.64,653.76 595.21,653.84 595.78,653.92 596.35,654.00 596.92,654.08 597.49,654.16 598.06,654.24 598.63,654.31 599.20,654.39 599.77,654.47 600.34,654.54 600.91,654.62 601.48,654.70 602.05,654.77 602.62,654.85 603.19,654.92 603.76,655.00 604.33,655.07 604.90,655.15 605.47,655.22 606.04,655.30 606.61,655.37 607.18,655.44 607.75,655.52 608.32,655.59 608.89,655.67 609.46,655.74 610.04,655.81 610.61,655.89 611.18,655.96 611.75,656.04 612.32,656.11 612.89,656.19 613.46,656.27 614.03,656.34 614.60,656.42 615.17,656.50 615.74,656.57 616.31,656.65 616.88,656.73 617.45,656.81 618.02,656.89 618.59,656.98 619.16,657.06 619.73,657.14 620.30,657.23 620.87,657.31 621.44,657.40 622.01,657.49 622.58,657.58 623.15,657.67 623.72,657.76 624.29,657.85 624.86,657.95 625.43,658.05 626.00,658.15 626.57,658.25 627.14,658.35 627.71,658.45 628.28,658.56 628.85,658.66 629.42,658.77 629.99,658.88 630.57,659.00 631.14,659.11 631.71,659.23 632.28,659.35 632.85,659.47 633.42,659.59 633.99,659.72 634.56,659.85 635.13,659.98 635.70,660.11 636.27,660.25 636.84,660.39 637.41,660.53 637.98,660.67 638.55,660.82 639.12,660.97 639.69,661.12 640.26,661.28 640.83,661.43 641.40,661.59 641.97,661.76 642.54,661.92 643.11,662.09 643.68,662.27 644.25,662.44 644.82,662.62 645.39,662.80 645.96,662.99 646.53,663.17 647.10,663.36 647.67,663.56 648.24,663.76 648.81,663.96 649.38,664.16 649.95,664.37 650.53,664.58 651.10,664.79 651.67,665.01 652.24,665.23 652.81,665.46 653.38,665.68 653.95,665.91 654.52,666.15 655.09,666.39 655.66,666.63 656.23,666.88 656.80,667.12 657.37,667.38 657.94,667.63 658.51,667.89 659.08,668.16 659.65,668.42 660.22,668.69 660.79,668.97 661.36,669.25 661.93,669.53 662.50,669.81 663.07,670.10 663.64,670.39 664.21,670.69 664.78,670.99 665.35,671.29 665.92,671.60 666.49,671.91 667.06,672.22 667.63,672.54 668.20,672.86 668.77,673.18 669.34,673.51 669.91,673.84 670.49,674.18 671.06,674.51 671.63,674.85 672.20,675.20 672.77,675.55 673.34,675.90 673.91,676.25 674.48,676.61 675.05,676.97 675.62,677.33 676.19,677.70 676.76,678.07 677.33,678.44 677.90,678.81 678.47,679.19 679.04,679.57 679.61,679.95 680.18,680.34 680.75,680.72 681.32,681.11 681.89,681.51 682.46,681.90 683.03,682.30 683.60,682.69 684.17,683.09 684.74,683.49 685.31,683.90 685.88,684.30 686.45,684.71 687.02,685.12 687.59,685.52 688.16,685.93 688.73,686.34 689.30,686.75 689.87,687.17 690.45,687.58 691.02,687.99 691.59,688.40 692.16,688.82 692.73,689.23 693.30,689.64 693.87,690.06 694.44,690.47 695.01,690.88 695.58,691.29 696.15,691.70 696.72,692.11 697.29,692.52 697.86,692.93 698.43,693.33 699.00,693.73 699.57,694.14 700.14,694.54 700.71,694.93 701.28,695.33 701.85,695.72 702.42,696.11 702.99,696.50 703.56,696.89 704.13,697.27 704.70,697.65 705.27,698.03 705.84,698.40 706.41,698.77 706.98,699.14 707.55,699.50 708.12,699.86 708.69,700.21 709.26,700.56 709.83,700.91 710.41,701.26 710.98,701.60 711.55,701.93 712.12,702.26 712.69,702.59 713.26,702.91 713.83,703.23 714.40,703.54 714.97,703.85 715.54,704.15 716.11,704.45 716.68,704.75 717.25,705.03 717.82,705.32 718.39,705.60 718.96,705.87 719.53,706.14 720.10,706.41 720.67,706.67 721.24,706.92 721.81,707.17 722.38,707.41 722.95,707.65 723.52,707.89 724.09,708.12 724.66,708.34 725.23,708.56 725.80,708.77 726.37,708.98 726.94,709.18 727.51,709.37 728.08,709.57 728.65,709.75 729.22,709.93 729.79,710.11 730.37,710.27 730.94,710.44 731.51,710.60 732.08,710.75 732.65,710.89 733.22,711.03 733.79,711.17 734.36,711.30 734.93,711.42 735.50,711.53 736.07,711.64 736.64,711.75 737.21,711.84 737.78,711.93 738.35,712.02 738.92,712.09 739.49,712.17 740.06,712.23 740.63,712.29 741.20,712.34 741.77,712.38 742.34,712.42 742.91,712.44 743.48,712.47 744.05,712.48 744.62,712.49 745.19,712.49 745.76,712.48 746.33,712.46 746.90,712.44 747.47,712.41 748.04,712.37 748.61,712.33 749.18,712.27 749.75,712.21 750.33,712.14 750.90,712.06 751.47,711.98 752.04,711.88 752.61,711.78 753.18,711.67 753.75,711.56 754.32,711.43 754.89,711.30 755.46,711.16 756.03,711.01 756.60,710.86 757.17,710.70 757.74,710.53 758.31,710.35 758.88,710.16 759.45,709.97 760.02,709.77 760.59,709.57 761.16,709.36 761.73,709.14 762.30,708.91 762.87,708.68 763.44,708.44 764.01,708.20 764.58,707.95 765.15,707.69 765.72,707.43 766.29,707.17 766.86,706.89 767.43,706.62 768.00,706.34 768.57,706.05 769.14,705.76 769.71,705.46 770.29,705.17 770.86,704.86 771.43,704.56 772.00,704.25 772.57,703.93 773.14,703.62 773.71,703.30 774.28,702.97 774.85,702.65 775.42,702.32 775.99,701.99 776.56,701.66 777.13,701.33 777.70,700.99 778.27,700.65 778.84,700.31 779.41,699.97 779.98,699.63 780.55,699.29 781.12,698.95 781.69,698.60 782.26,698.26 782.83,697.92 783.40,697.57 783.97,697.22 784.54,696.88 785.11,696.53 785.68,696.19 786.25,695.84 786.82,695.50 787.39,695.15 787.96,694.81 788.53,694.47 789.10,694.13 789.67,693.78 790.25,693.44 790.82,693.10 791.39,692.76 791.96,692.43 792.53,692.09 793.10,691.76 793.67,691.42 794.24,691.09 794.81,690.76 795.38,690.43 795.95,690.10 796.52,689.77 797.09,689.45 797.66,689.12 798.23,688.80 798.80,688.48 799.37,688.16 799.94,687.84 800.51,687.53 801.08,687.22 801.65,686.90 802.22,686.59 802.79,686.29 803.36,685.98 803.93,685.68 804.50,685.37 805.07,685.07 805.64,684.77 806.21,684.48 806.78,684.18 807.35,683.89 807.92,683.60 808.49,683.31 809.06,683.02 809.63,682.73 810.21,682.45 810.78,682.17 811.35,681.89 811.92,681.61 812.49,681.33 813.06,681.06 813.63,680.79 814.20,680.52 814.77,680.25 815.34,679.98 815.91,679.71 816.48,679.45 817.05,679.19 817.62,678.93 818.19,678.67 818.76,678.41 819.33,678.16 819.90,677.91 820.47,677.66 821.04,677.41 821.61,677.16 822.18,676.91 822.75,676.67 823.32,676.43 823.89,676.18 824.46,675.94 825.03,675.71 825.60,675.47 826.17,675.23 826.74,675.00 827.31,674.77 827.88,674.54 828.45,674.31 829.02,674.08 829.59,673.86 830.17,673.63 830.74,673.41 831.31,673.19 831.88,672.97 832.45,672.75 833.02,672.53 833.59,672.32 834.16,672.10 834.73,671.89 835.30,671.67 835.87,671.46 836.44,671.25 837.01,671.05 837.58,670.84 838.15,670.63 838.72,670.43 839.29,670.23 839.86,670.02 840.43,669.82 841.00,669.62 841.57,669.42 842.14,669.23 842.71,669.03 843.28,668.84 843.85,668.64 844.42,668.45 844.99,668.26 845.56,668.07 846.13,667.88 846.70,667.69 847.27,667.50 847.84,667.32 848.41,667.13 848.98,666.95 849.55,666.77 850.13,666.59 850.70,666.41 851.27,666.23 851.84,666.05 852.41,665.87 852.98,665.70 853.55,665.52 854.12,665.35 854.69,665.18 855.26,665.01 855.83,664.84 856.40,664.67 856.97,664.50 857.54,664.33 858.11,664.17 858.68,664.00 859.25,663.84 859.82,663.68 860.39,663.52 860.96,663.36 861.53,663.20 862.10,663.05 862.67,662.89 863.24,662.74 863.81,662.58 864.38,662.43 864.95,662.28 865.52,662.13 866.09,661.98 866.66,661.84 867.23,661.69 867.80,661.55 868.37,661.40 868.94,661.26 869.51,661.12 870.09,660.98 870.66,660.85 871.23,660.71 871.80,660.58 872.37,660.44 872.94,660.31 873.51,660.18 874.08,660.05 874.65,659.93 875.22,659.80 875.79,659.68 876.36,659.55 876.93,659.43 877.50,659.31 878.07,659.20 878.64,659.08 879.21,658.96 879.78,658.85 880.35,658.74 880.92,658.63 881.49,658.52 882.06,658.41 882.63,658.31 883.20,658.21 883.77,658.10 884.34,658.00 884.91,657.91 885.48,657.81 886.05,657.71 886.62,657.62 887.19,657.53 887.76,657.44 888.33,657.35 888.90,657.27 889.47,657.18 890.05,657.10 890.62,657.02 891.19,656.94 891.76,656.86 892.33,656.79 892.90,656.71 893.47,656.64 894.04,656.57 894.61,656.50 895.18,656.44 895.75,656.37 896.32,656.31 896.89,656.25 897.46,656.19 898.03,656.14 898.60,656.08 899.17,656.03 899.74,655.98 900.31,655.93 900.88,655.88 901.45,655.84 902.02,655.79 902.59,655.75 903.16,655.71 903.73,655.67 904.30,655.64 904.87,655.60 905.44,655.57 906.01,655.54 906.58,655.52 907.15,655.49 907.72,655.46 908.29,655.44 908.86,655.42 909.43,655.40 910.01,655.39 910.58,655.37 911.15,655.36 911.72,655.35 912.29,655.34 912.86,655.33 913.43,655.33 914.00,655.32 914.57,655.32 915.14,655.32 915.71,655.32 916.28,655.33 916.85,655.33 917.42,655.34 917.99,655.35 918.56,655.36 919.13,655.37 919.70,655.38 920.27,655.40 920.84,655.42 921.41,655.43 921.98,655.46 922.55,655.48 923.12,655.50 923.69,655.53 924.26,655.55 924.83,655.58 925.40,655.61 925.97,655.64 926.54,655.67 927.11,655.71 927.68,655.74 928.25,655.78 928.82,655.81 929.39,655.85 929.96,655.89 930.54,655.93 931.11,655.98 931.68,656.02 932.25,656.06 932.82,656.11 933.39,656.16 933.96,656.20 934.53,656.25 935.10,656.30 935.67,656.35 936.24,656.40 936.81,656.45 937.38,656.51 937.95,656.56 938.52,656.61 939.09,656.67 939.66,656.73 940.23,656.78 940.80,656.84 941.37,656.90 941.94,656.95 942.51,657.01 943.08,657.07 943.65,657.13 944.22,657.19 944.79,657.25 945.36,657.31 945.93,657.37 946.50,657.43 947.07,657.50 947.64,657.56 948.21,657.62 948.78,657.68 949.35,657.75 949.92,657.81 950.50,657.87 951.07,657.94 951.64,658.00 952.21,658.07 952.78,658.13 953.35,658.19 953.92,658.26 954.49,658.33 955.06,658.39 955.63,658.46 956.20,658.52 956.77,658.59 957.34,658.66 957.91,658.72 958.48,658.79 959.05,658.86 959.62,658.92 960.19,658.99 960.76,659.06 961.33,659.13 961.90,659.20 962.47,659.27 963.04,659.34 963.61,659.41 964.18,659.48 964.75,659.55 965.32,659.63 965.89,659.70 966.46,659.77 967.03,659.85 967.60,659.92 968.17,660.00 968.74,660.07 969.31,660.15 969.88,660.23 970.46,660.31 971.03,660.38 971.60,660.46 972.17,660.55 972.74,660.63 973.31,660.71 973.88,660.79 974.45,660.88 975.02,660.96 975.59,661.05 976.16,661.13 976.73,661.22 977.30,661.31 977.87,661.40 978.44,661.49 979.01,661.58 979.58,661.67 980.15,661.76 980.72,661.85 981.29,661.95 981.86,662.04 982.43,662.14 983.00,662.23 983.57,662.33 984.14,662.43 984.71,662.53 985.28,662.63 985.85,662.72 986.42,662.82 986.99,662.92 987.56,663.02 988.13,663.12 988.70,663.23 989.27,663.33 989.84,663.43 990.42,663.53 990.99,663.63 991.56,663.73 992.13,663.83 992.70,663.93 993.27,664.03 993.84,664.13 994.41,664.22 994.98,664.32 995.55,664.42 996.12,664.51 996.69,664.61 997.26,664.70 997.83,664.79 998.40,664.88 998.97,664.97 999.54,665.05 1000.11,665.14 1000.68,665.22 1001.25,665.30 1001.82,665.38 1002.39,665.45 1002.96,665.53 1003.53,665.60 1004.10,665.67 1004.67,665.73 1005.24,665.79 1005.81,665.85 1006.38,665.90 1006.95,665.95 1007.52,666.00 1008.09,666.05 1008.66,666.08 1009.23,666.12 1009.80,666.15 1010.38,666.18 1010.95,666.20 1011.52,666.22 1012.09,666.23 1012.66,666.24 1013.23,666.25 1013.80,666.25 1014.37,666.24 1014.94,666.23 1015.51,666.21 1016.08,666.19 1016.65,666.17 1017.22,666.13 1017.79,666.10 1018.36,666.05 1018.93,666.01 1019.50,665.95 1020.07,665.89 1020.64,665.83 1021.21,665.76 1021.78,665.68 1022.35,665.60 1022.92,665.51 1023.49,665.42 1024.06,665.33 1024.63,665.22 1025.20,665.11 1025.77,665.00 1026.34,664.88 1026.91,664.76 1027.48,664.63 1028.05,664.50 1028.62,664.36 1029.19,664.21 1029.76,664.06 1030.34,663.91 1030.91,663.75 1031.48,663.59 1032.05,663.43 1032.62,663.25 1033.19,663.08 1033.76,662.90 1034.33,662.72 1034.90,662.53 1035.47,662.34 1036.04,662.15 1036.61,661.95 1037.18,661.75 1037.75,661.55 1038.32,661.35 1038.89,661.14 1039.46,660.93 1040.03,660.71 1040.60,660.50 1041.17,660.28 1041.74,660.06 1042.31,659.84 1042.88,659.62 1043.45,659.39 1044.02,659.17 1044.59,658.94 1045.16,658.71 1045.73,658.48 1046.30,658.25 1046.87,658.02 1047.44,657.78 1048.01,657.55 1048.58,657.32 1049.15,657.08 1049.72,656.85 1050.30,656.61 1050.87,656.38 1051.44,656.14 1052.01,655.91 1052.58,655.67 1053.15,655.44 1053.72,655.21 1054.29,654.97 1054.86,654.74 1055.43,654.51 1056.00,654.28 1056.57,654.05 1057.14,653.82 1057.71,653.59 1058.28,653.36 1058.85,653.14 1059.42,652.91 1059.99,652.69 1060.56,652.46 1061.13,652.24 1061.70,652.02 1062.27,651.80 1062.84,651.59 1063.41,651.37 1063.98,651.16 1064.55,650.94 1065.12,650.73 1065.69,650.52 1066.26,650.31 1066.83,650.11 1067.40,649.90 1067.97,649.70 1068.54,649.50 1069.11,649.30 1069.68,649.10 1070.26,648.91 1070.83,648.71 1071.40,648.52 1071.97,648.33 1072.54,648.14 1073.11,647.96 1073.68,647.77 1074.25,647.59 1074.82,647.41 1075.39,647.23 1075.96,647.05 1076.53,646.88 1077.10,646.71 1077.67,646.54 1078.24,646.37 1078.81,646.20 1079.38,646.03 1079.95,645.87 1080.52,645.71 1081.09,645.55 1081.66,645.39 1082.23,645.24 1082.80,645.08 1083.37,644.93 1083.94,644.78 1084.51,644.63 1085.08,644.49 1085.65,644.34 1086.22,644.20 1086.79,644.06 1087.36,643.92 1087.93,643.78 1088.50,643.65 1089.07,643.52 1089.64,643.38 1090.22,643.26 1090.79,643.13 1091.36,643.00 1091.93,642.88 1092.50,642.75 1093.07,642.63 1093.64,642.51 1094.21,642.40 1094.78,642.28 1095.35,642.17 1095.92,642.05 1096.49,641.94 1097.06,641.84 1097.63,641.73 1098.20,641.62 1098.77,641.52 1099.34,641.42 1099.91,641.31 1100.48,641.22 1101.05,641.12 1101.62,641.02 1102.19,640.93 1102.76,640.83 1103.33,640.74 1103.90,640.65 1104.47,640.56 1105.04,640.48 1105.61,640.39 1106.18,640.31 1106.75,640.23 1107.32,640.14 1107.89,640.07 1108.46,639.99 1109.03,639.91 1109.60,639.84 1110.18,639.76 1110.75,639.69 1111.32,639.62 1111.89,639.55 1112.46,639.48 1113.03,639.41 1113.60,639.35 1114.17,639.28 1114.74,639.22 1115.31,639.16 1115.88,639.10 1116.45,639.04 1117.02,638.98 1117.59,638.92 1118.16,638.87 1118.73,638.81 1119.30,638.76 1119.87,638.71 1120.44,638.66 1121.01,638.61 1121.58,638.56 1122.15,638.52 1122.72,638.47 1123.29,638.43 1123.86,638.38 1124.43,638.34 1125.00,638.30 1125.57,638.26 1126.14,638.22 1126.71,638.18 1127.28,638.15 1127.85,638.11 1128.42,638.08 1128.99,638.04 1129.56,638.01 1130.14,637.98 1130.71,637.95 1131.28,637.92 1131.85,637.89 1132.42,637.87 1132.99,637.84 1133.56,637.82 1134.13,637.79 1134.70,637.77 1135.27,637.75 1135.84,637.73 1136.41,637.71 1136.98,637.69 1137.55,637.67 1138.12,637.65 1138.69,637.63 1139.26,637.62 1139.83,637.60 1140.40,637.59 1140.97,637.57 1141.54,637.56 1142.11,637.55 1142.68,637.54 1143.25,637.53 1143.82,637.52 1144.39,637.51 1144.96,637.50 1145.53,637.49 1146.10,637.48 1146.67,637.48 1147.24,637.47 1147.81,637.46 1148.38,637.46 1148.95,637.45 1149.52,637.45 1150.10,637.45 1150.67,637.44 1151.24,637.44 1151.81,637.44 1152.38,637.44 1152.95,637.43 1153.52,637.43 1154.09,637.43 1154.66,637.43 1155.23,637.43 1155.80,637.43 1156.37,637.43 1156.94,637.43 1157.51,637.43 1158.08,637.43 1158.65,637.43 1159.22,637.43 1159.79,637.43 1160.36,637.43 1160.93,637.43 1161.50,637.43 1162.07,637.44 1162.64,637.44 1163.21,637.44 1163.78,637.44 1164.35,637.44 1164.92,637.44 1165.49,637.44 1166.06,637.44 1166.63,637.44 1167.20,637.44 1167.77,637.44 1168.34,637.44 1168.91,637.43 1169.48,637.43 1170.06,637.43 1170.63,637.43 1171.20,637.43 1171.77,637.43 1172.34,637.42 1172.91,637.42 1173.48,637.42 1174.05,637.42 1174.62,637.41 1175.19,637.41 1175.76,637.41 1176.33,637.40 1176.90,637.40 1177.47,637.39 1178.04,637.39 1178.61,637.39 1179.18,637.38 1179.75,637.38 1180.32,637.37 1180.89,637.37 1181.46,637.36 1182.03,637.36 1182.60,637.35 1183.17,637.35 1183.74,637.34 1184.31,637.34 1184.88,637.33 1185.45,637.33 1186.02,637.32 1186.59,637.32 1187.16,637.32 1187.73,637.31 1188.30,637.31 1188.87,637.31 1189.44,637.30 1190.02,637.30 1190.59,637.30 1191.16,637.30 1191.73,637.29 1192.30,637.29 1192.87,637.29 1193.44,637.29 1194.01,637.29 1194.58,637.29 1195.15,637.29 1195.72,637.30 1196.29,637.30 1196.86,637.30 1197.43,637.31 1198.00,637.31 1198.57,637.32 1199.14,637.32 1199.71,637.33 1200.28,637.34 1200.85,637.34 1201.42,637.35 1201.99,637.36 1202.56,637.37 1203.13,637.39 1203.70,637.40 1204.27,637.41 1204.84,637.43 1205.41,637.44 1205.98,637.46 1206.55,637.47 1207.12,637.49 1207.69,637.51 1208.26,637.53 1208.83,637.55 1209.40,637.58 1209.97,637.60 1210.55,637.62 1211.12,637.65 1211.69,637.67 1212.26,637.70 1212.83,637.73 1213.40,637.76 1213.97,637.79 1214.54,637.83 1215.11,637.86 1215.68,637.89 1216.25,637.93 1216.82,637.97 1217.39,638.01 1217.96,638.04 1218.53,638.09 1219.10,638.13 1219.67,638.17 1220.24,638.22 1220.81,638.26 1221.38,638.31 1221.95,638.36 1222.52,638.41 1223.09,638.46 1223.66,638.51 1224.23,638.57 1224.80,638.62 1225.37,638.68 1225.94,638.74 1226.51,638.80 1227.08,638.86 1227.65,638.93 1228.22,638.99 1228.79,639.06 1229.36,639.12 1229.93,639.19 1230.51,639.26 1231.08,639.34 1231.65,639.41 1232.22,639.49 1232.79,639.56 1233.36,639.64 1233.93,639.72 1234.50,639.81 1235.07,639.89 1235.64,639.98 1236.21,640.06 1236.78,640.15 1237.35,640.25 1237.92,640.34 1238.49,640.43 1239.06,640.53 1239.63,640.63 1240.20,640.73 1240.77,640.83 1241.34,640.94 1241.91,641.04 1242.48,641.15 1243.05,641.26 1243.62,641.38 1244.19,641.49 1244.76,641.61 1245.33,641.73 1245.90,641.85 1246.47,641.97 1247.04,642.10 1247.61,642.23 1248.18,642.36 1248.75,642.49 1249.32,642.63 1249.89,642.77 1250.47,642.91 1251.04,643.05 1251.61,643.20 1252.18,643.34 1252.75,643.50 1253.32,643.65 1253.89,643.81 1254.46,643.97 1255.03,644.13 1255.60,644.29 1256.17,644.46 1256.74,644.63 1257.31,644.81 1257.88,644.98 1258.45,645.17 1259.02,645.35 1259.59,645.54 1260.16,645.73 1260.73,645.92 1261.30,646.12 1261.87,646.32 1262.44,646.53 1263.01,646.73 1263.58,646.95 1264.15,647.16 1264.72,647.38 1265.29,647.61 1265.86,647.84 1266.43,648.07 1267.00,648.31 1267.57,648.55 1268.14,648.79 1268.71,649.04 1269.28,649.30 1269.85,649.56 1270.43,649.82 1271.00,650.09 1271.57,650.37 1272.14,650.65 1272.71,650.93 1273.28,651.22 1273.85,651.52 1274.42,651.82 1274.99,652.13 1275.56,652.44 1276.13,652.76 1276.70,653.09 1277.27,653.42 1277.84,653.76 1278.41,654.10 1278.98,654.45 1279.55,654.81 1280.12,655.18 1280.69,655.55 1281.26,655.93 1281.83,656.32 1282.40,656.72 1282.97,657.12 1283.54,657.54 1284.11,657.96 1284.68,658.39 1285.25,658.83 1285.82,659.28 1286.39,659.73 1286.96,660.20 1287.53,660.68 1288.10,661.17 1288.67,661.66 1289.24,662.17 1289.81,662.69 1290.39,663.22 1290.96,663.77 1291.53,664.32 1292.10,664.89 1292.67,665.47 1293.24,666.06 1293.81,666.67 1294.38,667.29 1294.95,667.92 1295.52,668.57 1296.09,669.23 1296.66,669.91 1297.23,670.61 1297.80,671.32 1298.37,672.05 1298.94,672.79 1299.51,673.56 1300.08,674.34 1300.65,675.14 1301.22,675.96 1301.79,676.80 1302.36,677.67 1302.93,678.55 1303.50,679.46 1304.07,680.39 1304.64,681.34 1305.21,682.32 1305.78,683.32 1306.35,684.35 1306.92,685.41 1307.49,686.49 1308.06,687.60 1308.63,688.75 1309.20,689.92 1309.77,691.13 1310.35,692.37 1310.92,693.64 1311.49,694.95 1312.06,696.30 1312.63,697.69 1313.20,699.11 1313.77,700.58 1314.34,702.09 1314.91,703.64 1315.48,705.25 1316.05,706.89 1316.62,708.59 1317.19,710.34 1317.76,712.15 1318.33,714.01 1318.90,715.93 1319.47,717.91 1320.04,719.95 1320.61,722.06 1321.18,724.24 1321.75,726.49 1322.32,728.82 1322.89,731.23 1323.46,733.71 1324.03,736.29 1324.60,738.95 1325.17,741.71 1325.74,744.57 1326.31,747.53 1326.88,750.60 1327.45,753.79 1328.02,757.09 1328.59,760.53 1329.16,764.09 1329.73,767.80 1330.31,771.66 1330.88,775.68 1331.45,779.86 1332.02,784.22 1332.59,788.78 1333.16,793.53 1333.73,798.50 1334.30,803.70 1334.87,809.14 1335.44,814.85 1336.01,820.84 1336.58,827.14 1337.15,833.78 1337.72,840.78 1338.29,848.17 1338.86,855.99 1339.43,864.29 1340.00,873.11" fill="none" stroke="#20c4bc" stroke-width="2.2" clip-path="url(#pc)"/>
</svg>
</body></html>
